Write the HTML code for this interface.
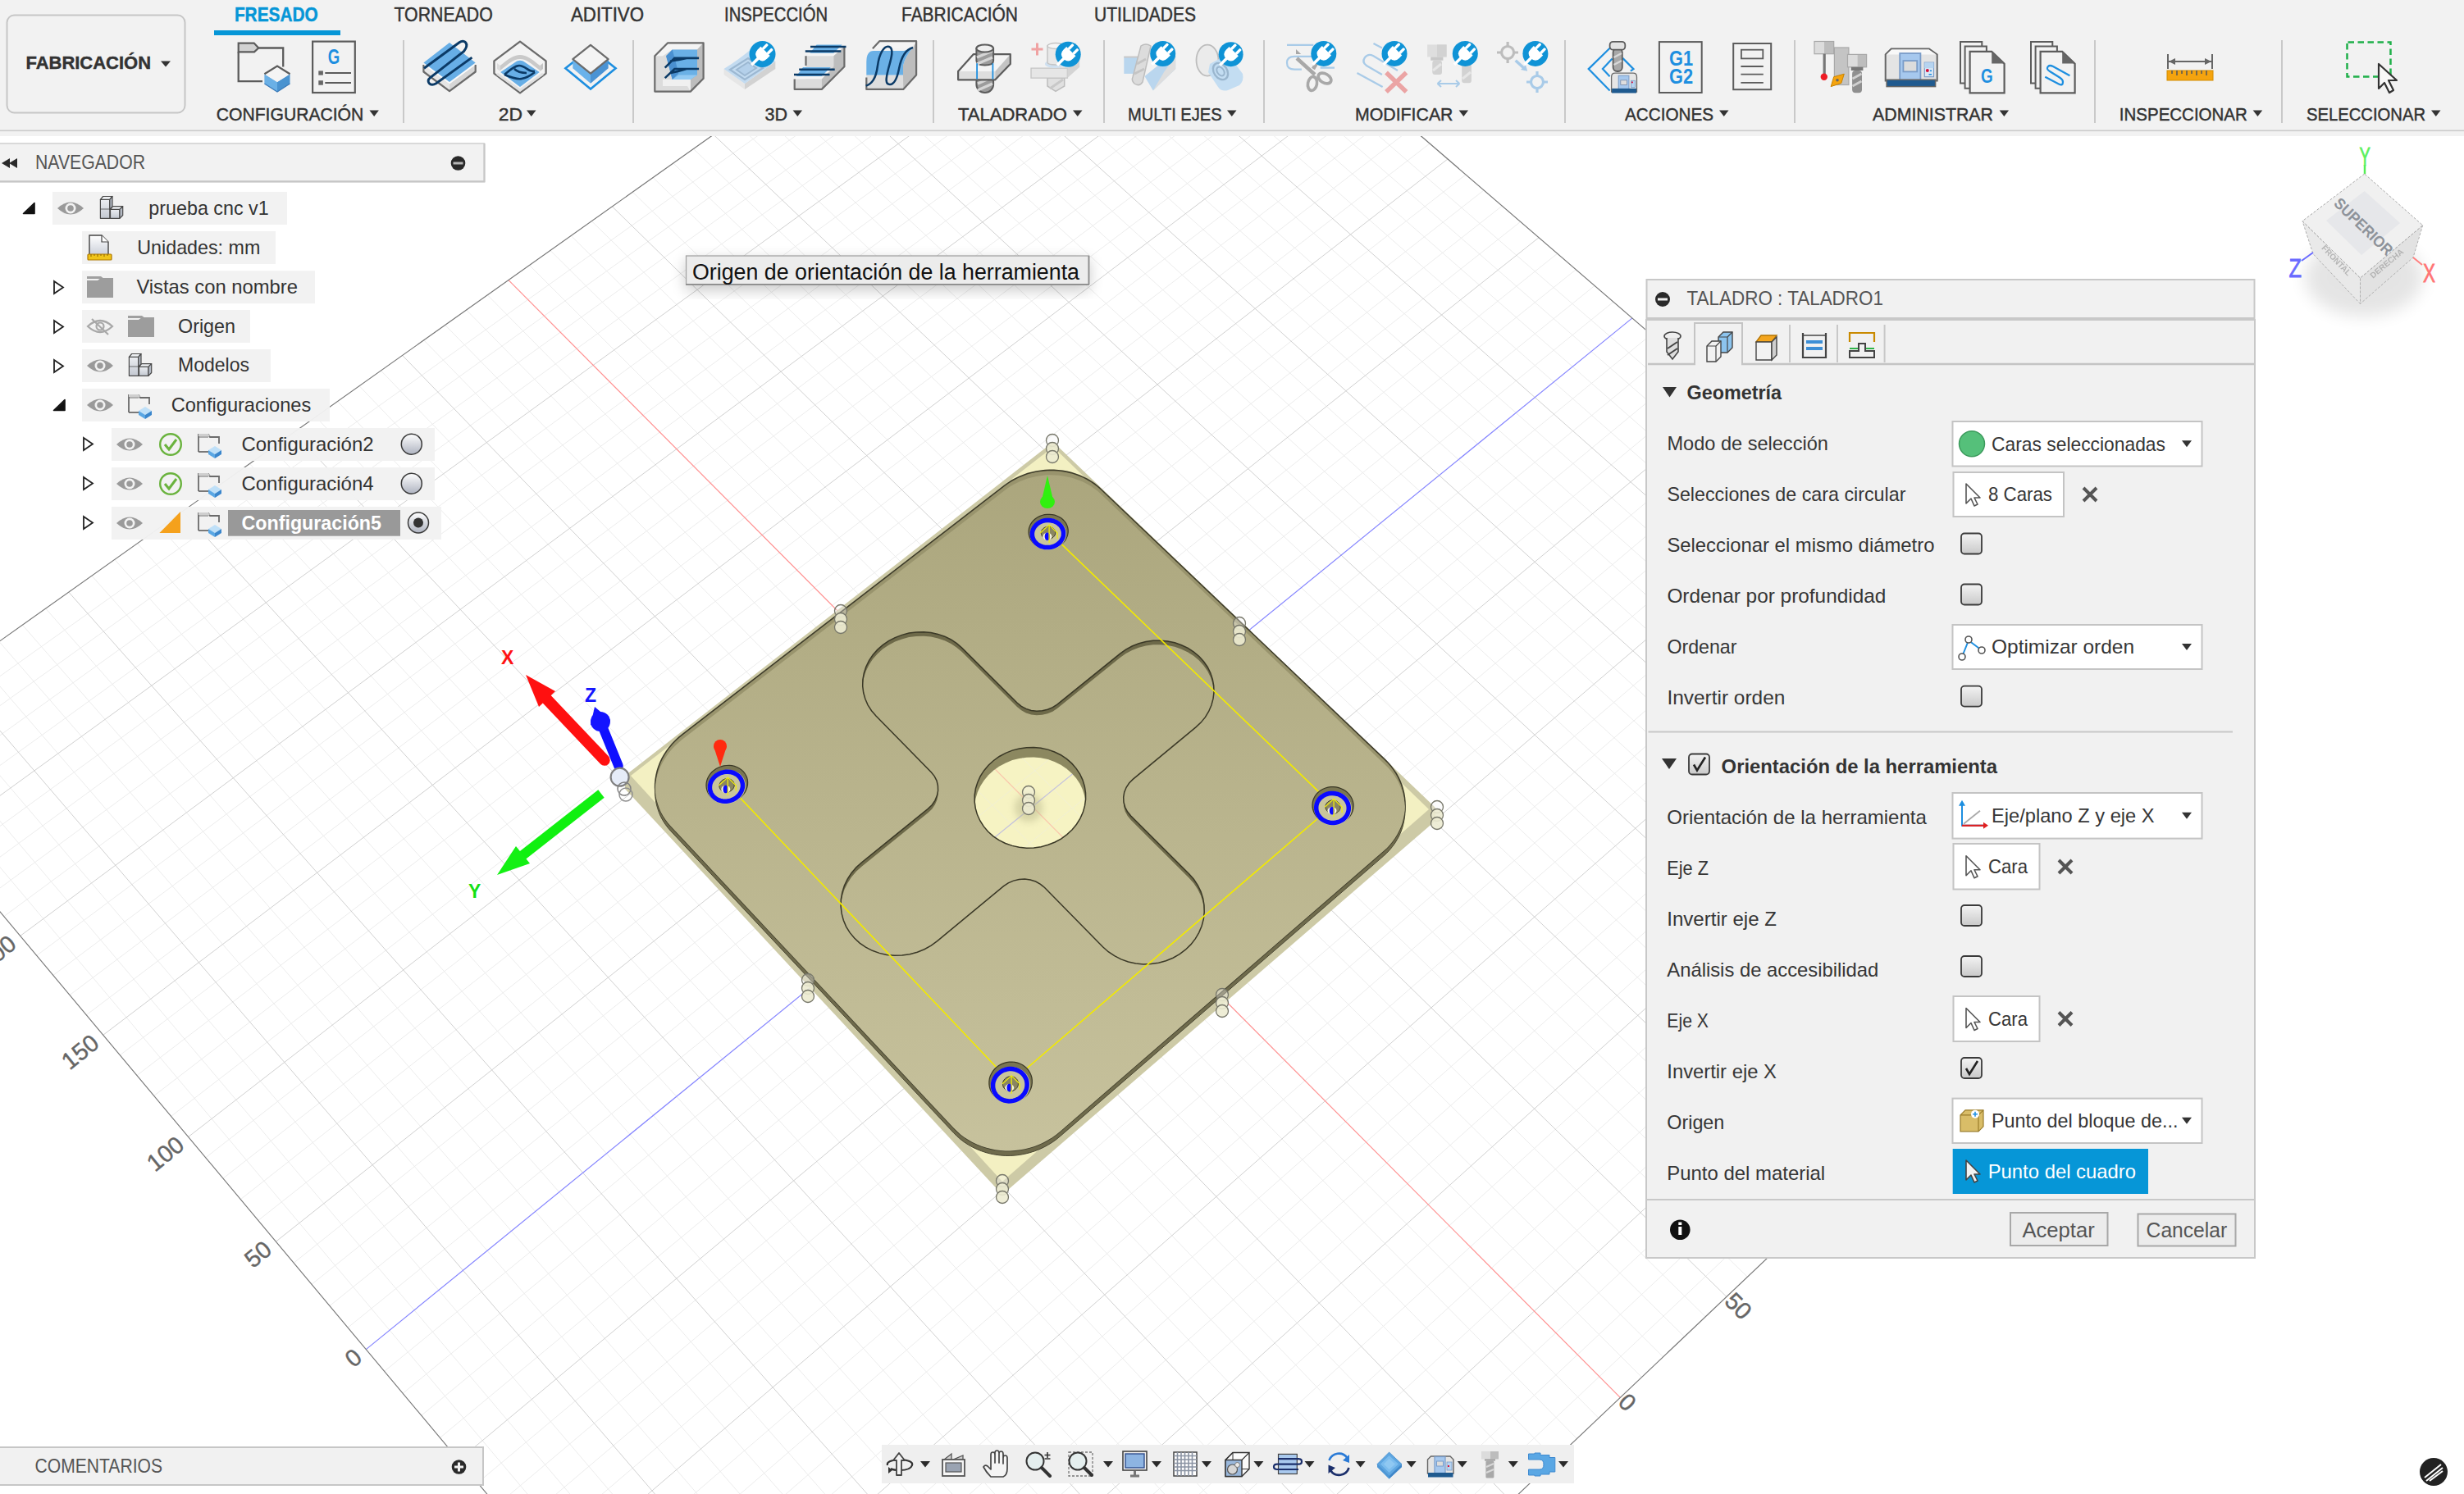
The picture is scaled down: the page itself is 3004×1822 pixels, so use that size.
<!DOCTYPE html>
<html><head><meta charset="utf-8"><title>Fusion CAM</title>
<style>
html,body{margin:0;padding:0;width:3004px;height:1822px;overflow:hidden;background:#ffffff;}
svg{display:block;position:absolute;left:0;top:0;font-family:"Liberation Sans", sans-serif;}
</style></head><body>
<svg width="3004" height="1822" viewBox="0 0 3004 1822">
<rect x="0" y="0" width="3004" height="1822" fill="#ffffff"/>
<g id="grid">
<path d="M1124.9 2457.3L2683.7 986.3M1179.4 2459.6L-145.4 884.8M1098.6 2425.9L2657.1 963.4M1210.1 2430.5L-116.3 864.1M1072.5 2394.7L2630.7 940.6M1240.6 2401.6L-87.3 843.5M1020.8 2332.8L2578.3 895.4M1301.0 2344.2L-29.7 802.7M995.1 2302.1L2552.3 873.0M1331.0 2315.8L-1.1 782.4M969.7 2271.7L2526.5 850.7M1360.8 2287.5L27.4 762.2M944.4 2241.4L2500.7 828.5M1390.4 2259.4L55.7 742.1M894.2 2181.4L2449.7 784.4M1449.1 2203.7L111.9 702.2M869.3 2151.6L2424.4 762.6M1478.2 2176.1L139.8 682.4M844.6 2122.1L2399.2 740.9M1507.1 2148.6L167.6 662.7M820.0 2092.7L2374.1 719.3M1535.9 2121.3L195.2 643.1M771.4 2034.5L2324.4 676.4M1593.0 2067.1L250.1 604.1M747.2 2005.6L2299.7 655.1M1621.3 2040.3L277.3 584.8M723.3 1977.0L2275.1 633.9M1649.5 2013.6L304.4 565.5M699.4 1948.4L2250.7 612.8M1677.4 1987.0L331.4 546.4M652.2 1891.9L2202.2 571.0M1732.9 1934.4L385.0 508.4M628.8 1863.9L2178.2 550.2M1760.5 1908.3L411.6 489.5M605.5 1836.1L2154.2 529.6M1787.8 1882.3L438.1 470.7M582.3 1808.4L2130.4 509.1M1815.1 1856.5L464.4 452.0M536.4 1753.5L2083.1 468.3M1869.1 1805.2L516.7 414.8M513.7 1726.3L2059.7 448.0M1895.8 1779.8L542.7 396.4M491.1 1699.3L2036.3 427.9M1922.5 1754.5L568.6 378.0M468.6 1672.4L2013.1 407.9M1949.0 1729.4L594.3 359.8M424.0 1619.1L1967.0 368.1M2001.5 1679.5L645.5 323.5M401.9 1592.6L1944.1 348.4M2027.6 1654.8L670.9 305.4M380.0 1566.3L1921.3 328.7M2053.5 1630.2L696.2 287.5M358.1 1540.2L1898.7 309.2M2079.3 1605.8L721.3 269.6M314.8 1488.4L1853.7 270.4M2130.4 1557.2L771.3 234.2M293.3 1462.7L1831.3 251.1M2155.8 1533.1L796.1 216.5M271.9 1437.2L1809.1 231.9M2181.0 1509.2L820.8 199.0M250.7 1411.8L1787.0 212.9M2206.2 1485.4L845.4 181.5M208.6 1361.4L1743.1 175.0M2256.0 1438.1L894.3 146.9M187.7 1336.4L1721.3 156.2M2280.7 1414.6L918.5 129.6M166.9 1311.5L1699.6 137.5M2305.3 1391.3L942.7 112.5M146.3 1286.8L1678.0 118.9M2329.7 1368.1L966.7 95.4M105.3 1237.8L1635.2 81.9M2378.3 1322.1L1014.5 61.5M85.0 1213.5L1613.9 63.5M2402.3 1299.2L1038.2 44.7M64.8 1189.4L1592.7 45.3M2426.3 1276.5L1061.9 27.9M44.7 1165.3L1571.6 27.1M2450.1 1253.9L1085.4 11.2M4.8 1117.6L1529.8 -9.0M2497.4 1209.0L1132.1 -21.9M-15.0 1094.0L1509.0 -26.9M2520.9 1186.7L1155.3 -38.4M-34.6 1070.5L1488.3 -44.8M2544.2 1164.6L1178.4 -54.8M-54.2 1047.1L1467.7 -62.5M2567.5 1142.5L1201.4 -71.2M-93.0 1000.7L1426.8 -97.8M2613.6 1098.8L1247.1 -103.6M-112.3 977.6L1406.5 -115.3M2636.5 1077.1L1269.9 -119.7M-131.4 954.7L1386.3 -132.7M2659.2 1055.5L1292.5 -135.8M-150.5 932.0L1366.2 -150.1M2681.9 1034.0L1315.0 -151.7" stroke="#ebebeb" stroke-width="0.95" fill="none"/>
<path d="M1046.6 2363.6L2604.4 917.9M1270.9 2372.8L-58.4 823.1M919.2 2211.3L2475.1 806.4M1419.8 2231.5L83.8 722.1M795.6 2063.5L2349.2 697.7M1564.6 2094.2L222.7 623.6M675.7 1920.1L2226.4 591.9M1705.3 1960.6L358.2 527.3M559.3 1780.9L2106.7 488.6M1842.1 1830.8L490.6 433.4M336.4 1514.2L1876.1 289.7M2104.9 1581.4L746.4 251.9M229.6 1386.5L1765.0 193.9M2231.1 1461.7L869.9 164.2M125.7 1262.3L1656.5 100.3M2354.1 1345.0L990.7 78.4M24.7 1141.4L1550.6 9.0M2473.8 1231.4L1108.8 -5.4M-73.7 1023.8L1447.2 -80.2M2590.6 1120.6L1224.3 -87.4" stroke="#d0d0d0" stroke-width="1.0" fill="none"/>
<path d="M446.3 1645.6L1990.0 387.9" stroke="#8484ff" stroke-width="1.2"/>
<path d="M1975.3 1704.4L620.0 341.6" stroke="#ff9090" stroke-width="1.2"/>
<path d="M-173.3 904.6L1342.0 -170.9L2709.1 1008.2L1150.1 2487.4Z" stroke="#787878" stroke-width="1.15" fill="none"/>
<text x="0" y="0" font-size="29" fill="#666666" stroke="#666" stroke-width="0.4" text-anchor="end" transform="translate(443.3 1658.6) rotate(-39)">0</text>
<text x="0" y="0" font-size="29" fill="#666666" stroke="#666" stroke-width="0.4" text-anchor="end" transform="translate(333.4 1527.2) rotate(-39)">50</text>
<text x="0" y="0" font-size="29" fill="#666666" stroke="#666" stroke-width="0.4" text-anchor="end" transform="translate(226.6 1399.5) rotate(-39)">100</text>
<text x="0" y="0" font-size="29" fill="#666666" stroke="#666" stroke-width="0.4" text-anchor="end" transform="translate(122.7 1275.3) rotate(-39)">150</text>
<text x="0" y="0" font-size="29" fill="#666666" stroke="#666" stroke-width="0.4" text-anchor="end" transform="translate(21.7 1154.4) rotate(-39)">200</text>
<text x="0" y="0" font-size="29" fill="#666666" stroke="#666" stroke-width="0.4" transform="translate(1971.3 1711.4) rotate(45)">0</text>
<text x="0" y="0" font-size="29" fill="#666666" stroke="#666" stroke-width="0.4" transform="translate(2100.9 1588.4) rotate(45)">50</text>
</g>
<defs>
<linearGradient id="topg" x1="0" y1="540" x2="0" y2="1440" gradientUnits="userSpaceOnUse"><stop offset="0" stop-color="#aaa57c"/><stop offset="1" stop-color="#c8c39e"/></linearGradient>
<clipPath id="cpPlate"><path d="M1688.5 926.4L1692.3 930.2L1695.8 934.3L1699.0 938.6L1702.0 943.0L1704.6 947.6L1706.8 952.4L1708.8 957.3L1710.3 962.2L1711.6 967.3L1712.4 972.4L1712.9 977.6L1713.0 982.7L1712.8 987.9L1712.1 993.0L1711.1 998.1L1709.8 1003.1L1708.1 1008.0L1706.0 1012.8L1703.5 1017.5L1700.8 1022.0L1697.7 1026.3L1694.3 1030.5L1690.6 1034.4L1686.6 1038.1L1292.3 1379.9L1287.7 1383.7L1282.8 1387.2L1277.7 1390.3L1272.4 1393.2L1266.9 1395.7L1261.3 1397.9L1255.5 1399.7L1249.6 1401.2L1243.7 1402.3L1237.7 1403.1L1231.6 1403.4L1225.6 1403.4L1219.6 1403.0L1213.7 1402.2L1207.8 1401.1L1202.0 1399.6L1196.4 1397.7L1190.9 1395.5L1185.6 1393.0L1180.5 1390.1L1175.6 1386.9L1171.0 1383.4L1166.7 1379.6L1162.6 1375.5L817.7 1007.4L814.2 1003.4L811.1 999.3L808.3 994.9L805.8 990.4L803.7 985.7L802.0 980.8L800.6 975.9L799.5 970.9L798.9 965.8L798.6 960.6L798.7 955.5L799.2 950.3L800.1 945.1L801.3 940.0L802.9 935.0L804.8 930.0L807.1 925.2L809.8 920.4L812.7 915.9L816.0 911.4L819.5 907.2L823.4 903.2L827.5 899.4L831.8 895.8L1224.7 592.2L1228.9 589.1L1233.3 586.3L1238.0 583.7L1242.8 581.4L1247.7 579.4L1252.8 577.6L1258.0 576.2L1263.3 575.0L1268.6 574.2L1274.1 573.6L1279.5 573.3L1284.9 573.4L1290.3 573.7L1295.7 574.4L1301.0 575.4L1306.2 576.6L1311.3 578.2L1316.2 580.0L1321.0 582.1L1325.7 584.5L1330.1 587.1L1334.3 590.0L1338.3 593.1L1342.1 596.5Z"/></clipPath>
<clipPath id="cpCross"><path d="M1449.6 1065.7L1455.4 1072.3L1460.2 1079.5L1464.0 1087.3L1466.6 1095.4L1468.0 1103.9L1468.2 1112.4L1467.3 1120.9L1465.1 1129.3L1461.7 1137.3L1457.3 1144.9L1451.8 1151.9L1445.3 1158.2L1438.1 1163.7L1430.1 1168.2L1421.5 1171.8L1412.5 1174.3L1403.3 1175.6L1393.9 1175.9L1384.6 1175.0L1375.5 1173.0L1366.8 1169.9L1358.7 1165.7L1351.2 1160.7L1344.5 1154.7L1273.6 1082.5L1268.5 1078.3L1262.6 1075.0L1256.1 1073.0L1249.3 1072.1L1242.3 1072.5L1235.6 1074.1L1229.2 1076.9L1223.6 1080.7L1142.7 1147.7L1135.2 1153.1L1127.0 1157.7L1118.3 1161.2L1109.1 1163.7L1099.8 1165.1L1090.4 1165.3L1081.1 1164.4L1072.1 1162.4L1063.5 1159.3L1055.4 1155.2L1048.1 1150.1L1041.6 1144.1L1036.1 1137.4L1031.6 1130.1L1028.3 1122.2L1026.1 1113.9L1025.1 1105.5L1025.3 1096.9L1026.8 1088.4L1029.4 1080.1L1033.2 1072.2L1038.0 1064.7L1043.9 1057.8L1050.6 1051.7L1131.4 986.3L1136.2 981.7L1139.9 976.3L1142.4 970.4L1143.6 964.3L1143.4 958.1L1142.0 952.1L1139.2 946.6L1135.3 941.7L1067.9 873.0L1062.5 866.7L1058.1 859.8L1054.9 852.5L1052.7 844.8L1051.7 836.8L1051.9 828.8L1053.3 820.9L1055.8 813.2L1059.5 805.7L1064.1 798.8L1069.7 792.4L1076.2 786.6L1083.4 781.7L1091.2 777.6L1099.6 774.4L1108.2 772.1L1117.1 770.9L1126.1 770.7L1134.9 771.6L1143.5 773.4L1151.7 776.2L1159.4 780.0L1166.4 784.7L1172.7 790.1L1240.2 857.3L1245.2 861.3L1250.9 864.4L1257.2 866.4L1263.9 867.2L1270.7 866.8L1277.2 865.3L1283.4 862.7L1288.9 859.1L1365.6 797.1L1372.6 792.1L1380.2 788.0L1388.4 784.8L1397.0 782.6L1405.8 781.3L1414.7 781.2L1423.5 782.0L1432.2 783.8L1440.4 786.7L1448.3 790.4L1455.4 795.1L1461.9 800.5L1467.5 806.7L1472.2 813.5L1475.8 820.7L1478.3 828.4L1479.7 836.2L1480.0 844.2L1479.0 852.2L1476.9 860.0L1473.7 867.5L1469.4 874.6L1464.1 881.1L1457.9 886.9L1381.2 950.4L1376.6 955.0L1373.1 960.3L1370.7 966.2L1369.7 972.3L1370.0 978.5L1371.7 984.5L1374.6 990.1L1378.7 995.1Z"/></clipPath>
<clipPath id="cpHole"><path d="M1300.9 1017.6L1293.9 1022.8L1286.2 1027.0L1277.9 1030.3L1269.3 1032.7L1260.4 1033.9L1251.5 1034.2L1242.6 1033.3L1234.0 1031.4L1225.7 1028.5L1218.0 1024.6L1210.9 1019.8L1204.7 1014.2L1199.3 1007.9L1194.9 1001.0L1191.5 993.6L1189.3 985.9L1188.2 978.0L1188.2 969.9L1189.4 961.9L1191.8 954.2L1195.2 946.7L1199.7 939.7L1205.1 933.2L1211.4 927.5L1218.4 922.5L1226.1 918.4L1234.2 915.1L1242.7 912.9L1251.5 911.7L1260.3 911.4L1269.0 912.3L1277.5 914.1L1285.6 917.0L1293.3 920.7L1300.3 925.4L1306.6 930.9L1312.0 937.1L1316.5 943.8L1319.9 951.1L1322.3 958.8L1323.5 966.7L1323.6 974.7L1322.5 982.7L1320.3 990.6L1316.9 998.1L1312.5 1005.2L1307.2 1011.8L1300.9 1017.6Z"/></clipPath>
<clipPath id="cpHoleF"><path d="M1300.9 1029.6L1293.9 1034.8L1286.2 1039.0L1277.9 1042.3L1269.3 1044.7L1260.4 1045.9L1251.5 1046.2L1242.6 1045.3L1234.0 1043.4L1225.7 1040.5L1218.0 1036.6L1210.9 1031.8L1204.7 1026.2L1199.3 1019.9L1194.9 1013.0L1191.5 1005.6L1189.3 997.9L1188.2 990.0L1188.2 981.9L1189.4 973.9L1191.8 966.2L1195.2 958.7L1199.7 951.7L1205.1 945.2L1211.4 939.5L1218.4 934.5L1226.1 930.4L1234.2 927.1L1242.7 924.9L1251.5 923.7L1260.3 923.4L1269.0 924.3L1277.5 926.1L1285.6 929.0L1293.3 932.7L1300.3 937.4L1306.6 942.9L1312.0 949.1L1316.5 955.8L1319.9 963.1L1322.3 970.8L1323.5 978.7L1323.6 986.7L1322.5 994.7L1320.3 1002.6L1316.9 1010.1L1312.5 1017.2L1307.2 1023.8L1300.9 1029.6Z"/></clipPath>
<radialGradient id="sph" cx="0.45" cy="0.35" r="0.7"><stop offset="0" stop-color="#ffffff"/><stop offset="1" stop-color="#d8d8c8"/></radialGradient>
<filter id="blur4" x="-50%" y="-50%" width="200%" height="200%"><feGaussianBlur stdDeviation="4"/></filter>
</defs>
<g id="model">
<path d="M1284.0 539.0L1750.0 985.0L1750.0 1001.0L1222.0 1457.0L762.0 962.0L762.0 946.0Z" fill="#cdcaa6"/>
<path d="M1284.0 545.0L1742.0 987.0L1222.0 1441.0L769.0 946.0Z" fill="#f3f0c2"/>
<path d="M1688.5 932.4L1692.3 936.2L1695.8 940.3L1699.0 944.6L1702.0 949.0L1704.6 953.6L1706.8 958.4L1708.8 963.3L1710.3 968.2L1711.6 973.3L1712.4 978.4L1712.9 983.6L1713.0 988.7L1712.8 993.9L1712.1 999.0L1711.1 1004.1L1709.8 1009.1L1708.1 1014.0L1706.0 1018.8L1703.5 1023.5L1700.8 1028.0L1697.7 1032.3L1694.3 1036.5L1690.6 1040.4L1686.6 1044.1L1292.3 1385.9L1287.7 1389.7L1282.8 1393.2L1277.7 1396.3L1272.4 1399.2L1266.9 1401.7L1261.3 1403.9L1255.5 1405.7L1249.6 1407.2L1243.7 1408.3L1237.7 1409.1L1231.6 1409.4L1225.6 1409.4L1219.6 1409.0L1213.7 1408.2L1207.8 1407.1L1202.0 1405.6L1196.4 1403.7L1190.9 1401.5L1185.6 1399.0L1180.5 1396.1L1175.6 1392.9L1171.0 1389.4L1166.7 1385.6L1162.6 1381.5L817.7 1013.4L814.2 1009.4L811.1 1005.3L808.3 1000.9L805.8 996.4L803.7 991.7L802.0 986.8L800.6 981.9L799.5 976.9L798.9 971.8L798.6 966.6L798.7 961.5L799.2 956.3L800.1 951.1L801.3 946.0L802.9 941.0L804.8 936.0L807.1 931.2L809.8 926.4L812.7 921.9L816.0 917.4L819.5 913.2L823.4 909.2L827.5 905.4L831.8 901.8L1224.7 598.2L1228.9 595.1L1233.3 592.3L1238.0 589.7L1242.8 587.4L1247.7 585.4L1252.8 583.6L1258.0 582.2L1263.3 581.0L1268.6 580.2L1274.1 579.6L1279.5 579.3L1284.9 579.4L1290.3 579.7L1295.7 580.4L1301.0 581.4L1306.2 582.6L1311.3 584.2L1316.2 586.0L1321.0 588.1L1325.7 590.5L1330.1 593.1L1334.3 596.0L1338.3 599.1L1342.1 602.5Z" fill="#6f6b4c" stroke="#4a4733" stroke-width="1"/>
<path d="M1688.5 926.4L1692.3 930.2L1695.8 934.3L1699.0 938.6L1702.0 943.0L1704.6 947.6L1706.8 952.4L1708.8 957.3L1710.3 962.2L1711.6 967.3L1712.4 972.4L1712.9 977.6L1713.0 982.7L1712.8 987.9L1712.1 993.0L1711.1 998.1L1709.8 1003.1L1708.1 1008.0L1706.0 1012.8L1703.5 1017.5L1700.8 1022.0L1697.7 1026.3L1694.3 1030.5L1690.6 1034.4L1686.6 1038.1L1292.3 1379.9L1287.7 1383.7L1282.8 1387.2L1277.7 1390.3L1272.4 1393.2L1266.9 1395.7L1261.3 1397.9L1255.5 1399.7L1249.6 1401.2L1243.7 1402.3L1237.7 1403.1L1231.6 1403.4L1225.6 1403.4L1219.6 1403.0L1213.7 1402.2L1207.8 1401.1L1202.0 1399.6L1196.4 1397.7L1190.9 1395.5L1185.6 1393.0L1180.5 1390.1L1175.6 1386.9L1171.0 1383.4L1166.7 1379.6L1162.6 1375.5L817.7 1007.4L814.2 1003.4L811.1 999.3L808.3 994.9L805.8 990.4L803.7 985.7L802.0 980.8L800.6 975.9L799.5 970.9L798.9 965.8L798.6 960.6L798.7 955.5L799.2 950.3L800.1 945.1L801.3 940.0L802.9 935.0L804.8 930.0L807.1 925.2L809.8 920.4L812.7 915.9L816.0 911.4L819.5 907.2L823.4 903.2L827.5 899.4L831.8 895.8L1224.7 592.2L1228.9 589.1L1233.3 586.3L1238.0 583.7L1242.8 581.4L1247.7 579.4L1252.8 577.6L1258.0 576.2L1263.3 575.0L1268.6 574.2L1274.1 573.6L1279.5 573.3L1284.9 573.4L1290.3 573.7L1295.7 574.4L1301.0 575.4L1306.2 576.6L1311.3 578.2L1316.2 580.0L1321.0 582.1L1325.7 584.5L1330.1 587.1L1334.3 590.0L1338.3 593.1L1342.1 596.5Z" fill="#99946d" stroke="#3e3c2a" stroke-width="1.6"/>
<g clip-path="url(#cpPlate)"><path d="M1688.5 932.4L1692.3 936.2L1695.8 940.3L1699.0 944.6L1702.0 949.0L1704.6 953.6L1706.8 958.4L1708.8 963.3L1710.3 968.2L1711.6 973.3L1712.4 978.4L1712.9 983.6L1713.0 988.7L1712.8 993.9L1712.1 999.0L1711.1 1004.1L1709.8 1009.1L1708.1 1014.0L1706.0 1018.8L1703.5 1023.5L1700.8 1028.0L1697.7 1032.3L1694.3 1036.5L1690.6 1040.4L1686.6 1044.1L1292.3 1385.9L1287.7 1389.7L1282.8 1393.2L1277.7 1396.3L1272.4 1399.2L1266.9 1401.7L1261.3 1403.9L1255.5 1405.7L1249.6 1407.2L1243.7 1408.3L1237.7 1409.1L1231.6 1409.4L1225.6 1409.4L1219.6 1409.0L1213.7 1408.2L1207.8 1407.1L1202.0 1405.6L1196.4 1403.7L1190.9 1401.5L1185.6 1399.0L1180.5 1396.1L1175.6 1392.9L1171.0 1389.4L1166.7 1385.6L1162.6 1381.5L817.7 1013.4L814.2 1009.4L811.1 1005.3L808.3 1000.9L805.8 996.4L803.7 991.7L802.0 986.8L800.6 981.9L799.5 976.9L798.9 971.8L798.6 966.6L798.7 961.5L799.2 956.3L800.1 951.1L801.3 946.0L802.9 941.0L804.8 936.0L807.1 931.2L809.8 926.4L812.7 921.9L816.0 917.4L819.5 913.2L823.4 909.2L827.5 905.4L831.8 901.8L1224.7 598.2L1228.9 595.1L1233.3 592.3L1238.0 589.7L1242.8 587.4L1247.7 585.4L1252.8 583.6L1258.0 582.2L1263.3 581.0L1268.6 580.2L1274.1 579.6L1279.5 579.3L1284.9 579.4L1290.3 579.7L1295.7 580.4L1301.0 581.4L1306.2 582.6L1311.3 584.2L1316.2 586.0L1321.0 588.1L1325.7 590.5L1330.1 593.1L1334.3 596.0L1338.3 599.1L1342.1 602.5Z" fill="url(#topg)"/></g>
<path d="M1449.6 1065.7L1455.4 1072.3L1460.2 1079.5L1464.0 1087.3L1466.6 1095.4L1468.0 1103.9L1468.2 1112.4L1467.3 1120.9L1465.1 1129.3L1461.7 1137.3L1457.3 1144.9L1451.8 1151.9L1445.3 1158.2L1438.1 1163.7L1430.1 1168.2L1421.5 1171.8L1412.5 1174.3L1403.3 1175.6L1393.9 1175.9L1384.6 1175.0L1375.5 1173.0L1366.8 1169.9L1358.7 1165.7L1351.2 1160.7L1344.5 1154.7L1273.6 1082.5L1268.5 1078.3L1262.6 1075.0L1256.1 1073.0L1249.3 1072.1L1242.3 1072.5L1235.6 1074.1L1229.2 1076.9L1223.6 1080.7L1142.7 1147.7L1135.2 1153.1L1127.0 1157.7L1118.3 1161.2L1109.1 1163.7L1099.8 1165.1L1090.4 1165.3L1081.1 1164.4L1072.1 1162.4L1063.5 1159.3L1055.4 1155.2L1048.1 1150.1L1041.6 1144.1L1036.1 1137.4L1031.6 1130.1L1028.3 1122.2L1026.1 1113.9L1025.1 1105.5L1025.3 1096.9L1026.8 1088.4L1029.4 1080.1L1033.2 1072.2L1038.0 1064.7L1043.9 1057.8L1050.6 1051.7L1131.4 986.3L1136.2 981.7L1139.9 976.3L1142.4 970.4L1143.6 964.3L1143.4 958.1L1142.0 952.1L1139.2 946.6L1135.3 941.7L1067.9 873.0L1062.5 866.7L1058.1 859.8L1054.9 852.5L1052.7 844.8L1051.7 836.8L1051.9 828.8L1053.3 820.9L1055.8 813.2L1059.5 805.7L1064.1 798.8L1069.7 792.4L1076.2 786.6L1083.4 781.7L1091.2 777.6L1099.6 774.4L1108.2 772.1L1117.1 770.9L1126.1 770.7L1134.9 771.6L1143.5 773.4L1151.7 776.2L1159.4 780.0L1166.4 784.7L1172.7 790.1L1240.2 857.3L1245.2 861.3L1250.9 864.4L1257.2 866.4L1263.9 867.2L1270.7 866.8L1277.2 865.3L1283.4 862.7L1288.9 859.1L1365.6 797.1L1372.6 792.1L1380.2 788.0L1388.4 784.8L1397.0 782.6L1405.8 781.3L1414.7 781.2L1423.5 782.0L1432.2 783.8L1440.4 786.7L1448.3 790.4L1455.4 795.1L1461.9 800.5L1467.5 806.7L1472.2 813.5L1475.8 820.7L1478.3 828.4L1479.7 836.2L1480.0 844.2L1479.0 852.2L1476.9 860.0L1473.7 867.5L1469.4 874.6L1464.1 881.1L1457.9 886.9L1381.2 950.4L1376.6 955.0L1373.1 960.3L1370.7 966.2L1369.7 972.3L1370.0 978.5L1371.7 984.5L1374.6 990.1L1378.7 995.1Z" fill="#6d6949"/>
<g clip-path="url(#cpCross)"><path d="M1449.6 1070.7L1455.4 1077.3L1460.2 1084.5L1464.0 1092.3L1466.6 1100.4L1468.0 1108.9L1468.2 1117.4L1467.3 1125.9L1465.1 1134.3L1461.7 1142.3L1457.3 1149.9L1451.8 1156.9L1445.3 1163.2L1438.1 1168.7L1430.1 1173.2L1421.5 1176.8L1412.5 1179.3L1403.3 1180.6L1393.9 1180.9L1384.6 1180.0L1375.5 1178.0L1366.8 1174.9L1358.7 1170.7L1351.2 1165.7L1344.5 1159.7L1273.6 1087.5L1268.5 1083.3L1262.6 1080.0L1256.1 1078.0L1249.3 1077.1L1242.3 1077.5L1235.6 1079.1L1229.2 1081.9L1223.6 1085.7L1142.7 1152.7L1135.2 1158.1L1127.0 1162.7L1118.3 1166.2L1109.1 1168.7L1099.8 1170.1L1090.4 1170.3L1081.1 1169.4L1072.1 1167.4L1063.5 1164.3L1055.4 1160.2L1048.1 1155.1L1041.6 1149.1L1036.1 1142.4L1031.6 1135.1L1028.3 1127.2L1026.1 1118.9L1025.1 1110.5L1025.3 1101.9L1026.8 1093.4L1029.4 1085.1L1033.2 1077.2L1038.0 1069.7L1043.9 1062.8L1050.6 1056.7L1131.4 991.3L1136.2 986.7L1139.9 981.3L1142.4 975.4L1143.6 969.3L1143.4 963.1L1142.0 957.1L1139.2 951.6L1135.3 946.7L1067.9 878.0L1062.5 871.7L1058.1 864.8L1054.9 857.5L1052.7 849.8L1051.7 841.8L1051.9 833.8L1053.3 825.9L1055.8 818.2L1059.5 810.7L1064.1 803.8L1069.7 797.4L1076.2 791.6L1083.4 786.7L1091.2 782.6L1099.6 779.4L1108.2 777.1L1117.1 775.9L1126.1 775.7L1134.9 776.6L1143.5 778.4L1151.7 781.2L1159.4 785.0L1166.4 789.7L1172.7 795.1L1240.2 862.3L1245.2 866.3L1250.9 869.4L1257.2 871.4L1263.9 872.2L1270.7 871.8L1277.2 870.3L1283.4 867.7L1288.9 864.1L1365.6 802.1L1372.6 797.1L1380.2 793.0L1388.4 789.8L1397.0 787.6L1405.8 786.3L1414.7 786.2L1423.5 787.0L1432.2 788.8L1440.4 791.7L1448.3 795.4L1455.4 800.1L1461.9 805.5L1467.5 811.7L1472.2 818.5L1475.8 825.7L1478.3 833.4L1479.7 841.2L1480.0 849.2L1479.0 857.2L1476.9 865.0L1473.7 872.5L1469.4 879.6L1464.1 886.1L1457.9 891.9L1381.2 955.4L1376.6 960.0L1373.1 965.3L1370.7 971.2L1369.7 977.3L1370.0 983.5L1371.7 989.5L1374.6 995.1L1378.7 1000.1Z" fill="url(#topg)"/></g>
<path d="M1449.6 1065.7L1455.4 1072.3L1460.2 1079.5L1464.0 1087.3L1466.6 1095.4L1468.0 1103.9L1468.2 1112.4L1467.3 1120.9L1465.1 1129.3L1461.7 1137.3L1457.3 1144.9L1451.8 1151.9L1445.3 1158.2L1438.1 1163.7L1430.1 1168.2L1421.5 1171.8L1412.5 1174.3L1403.3 1175.6L1393.9 1175.9L1384.6 1175.0L1375.5 1173.0L1366.8 1169.9L1358.7 1165.7L1351.2 1160.7L1344.5 1154.7L1273.6 1082.5L1268.5 1078.3L1262.6 1075.0L1256.1 1073.0L1249.3 1072.1L1242.3 1072.5L1235.6 1074.1L1229.2 1076.9L1223.6 1080.7L1142.7 1147.7L1135.2 1153.1L1127.0 1157.7L1118.3 1161.2L1109.1 1163.7L1099.8 1165.1L1090.4 1165.3L1081.1 1164.4L1072.1 1162.4L1063.5 1159.3L1055.4 1155.2L1048.1 1150.1L1041.6 1144.1L1036.1 1137.4L1031.6 1130.1L1028.3 1122.2L1026.1 1113.9L1025.1 1105.5L1025.3 1096.9L1026.8 1088.4L1029.4 1080.1L1033.2 1072.2L1038.0 1064.7L1043.9 1057.8L1050.6 1051.7L1131.4 986.3L1136.2 981.7L1139.9 976.3L1142.4 970.4L1143.6 964.3L1143.4 958.1L1142.0 952.1L1139.2 946.6L1135.3 941.7L1067.9 873.0L1062.5 866.7L1058.1 859.8L1054.9 852.5L1052.7 844.8L1051.7 836.8L1051.9 828.8L1053.3 820.9L1055.8 813.2L1059.5 805.7L1064.1 798.8L1069.7 792.4L1076.2 786.6L1083.4 781.7L1091.2 777.6L1099.6 774.4L1108.2 772.1L1117.1 770.9L1126.1 770.7L1134.9 771.6L1143.5 773.4L1151.7 776.2L1159.4 780.0L1166.4 784.7L1172.7 790.1L1240.2 857.3L1245.2 861.3L1250.9 864.4L1257.2 866.4L1263.9 867.2L1270.7 866.8L1277.2 865.3L1283.4 862.7L1288.9 859.1L1365.6 797.1L1372.6 792.1L1380.2 788.0L1388.4 784.8L1397.0 782.6L1405.8 781.3L1414.7 781.2L1423.5 782.0L1432.2 783.8L1440.4 786.7L1448.3 790.4L1455.4 795.1L1461.9 800.5L1467.5 806.7L1472.2 813.5L1475.8 820.7L1478.3 828.4L1479.7 836.2L1480.0 844.2L1479.0 852.2L1476.9 860.0L1473.7 867.5L1469.4 874.6L1464.1 881.1L1457.9 886.9L1381.2 950.4L1376.6 955.0L1373.1 960.3L1370.7 966.2L1369.7 972.3L1370.0 978.5L1371.7 984.5L1374.6 990.1L1378.7 995.1Z" fill="none" stroke="#3a3826" stroke-width="1.5"/>
<path d="M1300.9 1017.6L1293.9 1022.8L1286.2 1027.0L1277.9 1030.3L1269.3 1032.7L1260.4 1033.9L1251.5 1034.2L1242.6 1033.3L1234.0 1031.4L1225.7 1028.5L1218.0 1024.6L1210.9 1019.8L1204.7 1014.2L1199.3 1007.9L1194.9 1001.0L1191.5 993.6L1189.3 985.9L1188.2 978.0L1188.2 969.9L1189.4 961.9L1191.8 954.2L1195.2 946.7L1199.7 939.7L1205.1 933.2L1211.4 927.5L1218.4 922.5L1226.1 918.4L1234.2 915.1L1242.7 912.9L1251.5 911.7L1260.3 911.4L1269.0 912.3L1277.5 914.1L1285.6 917.0L1293.3 920.7L1300.3 925.4L1306.6 930.9L1312.0 937.1L1316.5 943.8L1319.9 951.1L1322.3 958.8L1323.5 966.7L1323.6 974.7L1322.5 982.7L1320.3 990.6L1316.9 998.1L1312.5 1005.2L1307.2 1011.8L1300.9 1017.6Z" fill="#8c8860"/>
<g clip-path="url(#cpHole)"><path d="M1300.9 1029.6L1293.9 1034.8L1286.2 1039.0L1277.9 1042.3L1269.3 1044.7L1260.4 1045.9L1251.5 1046.2L1242.6 1045.3L1234.0 1043.4L1225.7 1040.5L1218.0 1036.6L1210.9 1031.8L1204.7 1026.2L1199.3 1019.9L1194.9 1013.0L1191.5 1005.6L1189.3 997.9L1188.2 990.0L1188.2 981.9L1189.4 973.9L1191.8 966.2L1195.2 958.7L1199.7 951.7L1205.1 945.2L1211.4 939.5L1218.4 934.5L1226.1 930.4L1234.2 927.1L1242.7 924.9L1251.5 923.7L1260.3 923.4L1269.0 924.3L1277.5 926.1L1285.6 929.0L1293.3 932.7L1300.3 937.4L1306.6 942.9L1312.0 949.1L1316.5 955.8L1319.9 963.1L1322.3 970.8L1323.5 978.7L1323.6 986.7L1322.5 994.7L1320.3 1002.6L1316.9 1010.1L1312.5 1017.2L1307.2 1023.8L1300.9 1029.6Z" fill="#f6f3c3"/></g>
<g clip-path="url(#cpHole)"><g clip-path="url(#cpHoleF)"><use href="#grid" opacity="0.45"/></g><circle cx="1254" cy="985" r="17" fill="#b8b68c" opacity="0.5" filter="url(#blur4)"/></g>
<path d="M1300.9 1017.6L1293.9 1022.8L1286.2 1027.0L1277.9 1030.3L1269.3 1032.7L1260.4 1033.9L1251.5 1034.2L1242.6 1033.3L1234.0 1031.4L1225.7 1028.5L1218.0 1024.6L1210.9 1019.8L1204.7 1014.2L1199.3 1007.9L1194.9 1001.0L1191.5 993.6L1189.3 985.9L1188.2 978.0L1188.2 969.9L1189.4 961.9L1191.8 954.2L1195.2 946.7L1199.7 939.7L1205.1 933.2L1211.4 927.5L1218.4 922.5L1226.1 918.4L1234.2 915.1L1242.7 912.9L1251.5 911.7L1260.3 911.4L1269.0 912.3L1277.5 914.1L1285.6 917.0L1293.3 920.7L1300.3 925.4L1306.6 930.9L1312.0 937.1L1316.5 943.8L1319.9 951.1L1322.3 958.8L1323.5 966.7L1323.6 974.7L1322.5 982.7L1320.3 990.6L1316.9 998.1L1312.5 1005.2L1307.2 1011.8L1300.9 1017.6Z" fill="none" stroke="#3a3826" stroke-width="1.5"/>
<path d="M1278.1 648.1L1625.1 982.3L1232.1 1319.8L886.3 956.1" fill="none" stroke="#f2ea00" stroke-width="1.6"/>
<path d="M1294.1 663.6L1291.6 665.3L1288.9 666.7L1286.0 667.9L1282.9 668.6L1279.8 669.1L1276.6 669.1L1273.5 668.8L1270.4 668.2L1267.5 667.2L1264.8 665.9L1262.3 664.2L1260.0 662.3L1258.1 660.2L1256.5 657.9L1255.3 655.3L1254.5 652.7L1254.1 650.0L1254.1 647.3L1254.5 644.5L1255.3 641.9L1256.5 639.3L1258.1 636.9L1260.0 634.7L1262.2 632.7L1264.7 631.0L1267.4 629.6L1270.3 628.5L1273.4 627.7L1276.5 627.3L1279.6 627.3L1282.8 627.6L1285.8 628.2L1288.7 629.2L1291.4 630.5L1294.0 632.1L1296.2 634.0L1298.1 636.1L1299.7 638.4L1300.9 640.9L1301.8 643.6L1302.2 646.3L1302.2 649.0L1301.8 651.7L1301.0 654.4L1299.8 657.0L1298.3 659.4L1296.4 661.6L1294.1 663.6Z" fill="#7a7652" stroke="#3a3826" stroke-width="1.2"/>
<g clip-path="url(#cpPlate)"><path d="M1292.6 665.6L1290.3 667.2L1287.8 668.5L1285.1 669.5L1282.3 670.2L1279.4 670.6L1276.5 670.7L1273.6 670.4L1270.8 669.8L1268.2 668.9L1265.6 667.7L1263.3 666.2L1261.3 664.5L1259.5 662.5L1258.1 660.3L1257.0 658.0L1256.2 655.6L1255.8 653.1L1255.8 650.6L1256.2 648.1L1256.9 645.7L1258.0 643.3L1259.5 641.1L1261.2 639.1L1263.3 637.3L1265.6 635.7L1268.1 634.4L1270.7 633.4L1273.5 632.7L1276.4 632.3L1279.3 632.3L1282.1 632.5L1284.9 633.1L1287.6 634.0L1290.1 635.2L1292.4 636.7L1294.5 638.4L1296.2 640.4L1297.7 642.5L1298.8 644.8L1299.6 647.2L1300.0 649.7L1300.0 652.2L1299.6 654.7L1298.9 657.2L1297.8 659.5L1296.4 661.7L1294.6 663.8L1292.6 665.6Z" fill="#c9c59c"/></g>
<path d="M1290.1 663.2L1288.1 664.6L1286.0 665.7L1283.7 666.6L1281.3 667.2L1278.8 667.6L1276.3 667.6L1273.8 667.4L1271.4 666.9L1269.0 666.1L1266.9 665.0L1264.9 663.8L1263.1 662.2L1261.6 660.6L1260.3 658.7L1259.4 656.7L1258.7 654.6L1258.4 652.5L1258.4 650.3L1258.7 648.1L1259.4 646.0L1260.3 644.0L1261.6 642.1L1263.1 640.4L1264.8 638.8L1266.8 637.4L1269.0 636.3L1271.3 635.4L1273.7 634.8L1276.2 634.5L1278.6 634.5L1281.1 634.7L1283.5 635.2L1285.8 636.0L1288.0 637.0L1290.0 638.3L1291.8 639.8L1293.3 641.5L1294.6 643.3L1295.5 645.3L1296.2 647.4L1296.5 649.5L1296.5 651.7L1296.2 653.9L1295.6 656.0L1294.6 658.0L1293.4 659.9L1291.9 661.7L1290.1 663.2Z" fill="none" stroke="#0a0aff" stroke-width="5.5"/>
<path d="M1283.8 655.4L1282.9 656.0L1281.9 656.5L1280.9 656.9L1279.8 657.2L1278.6 657.3L1277.5 657.4L1276.3 657.2L1275.2 657.0L1274.2 656.7L1273.2 656.2L1272.3 655.6L1271.5 654.9L1270.8 654.1L1270.2 653.3L1269.8 652.4L1269.5 651.4L1269.3 650.5L1269.3 649.5L1269.5 648.5L1269.8 647.5L1270.2 646.6L1270.8 645.7L1271.5 644.9L1272.3 644.2L1273.2 643.6L1274.1 643.1L1275.2 642.7L1276.3 642.4L1277.4 642.3L1278.6 642.2L1279.7 642.3L1280.8 642.6L1281.8 642.9L1282.8 643.4L1283.7 644.0L1284.5 644.7L1285.2 645.4L1285.8 646.3L1286.3 647.2L1286.6 648.1L1286.7 649.1L1286.7 650.1L1286.6 651.1L1286.3 652.0L1285.9 653.0L1285.3 653.8L1284.6 654.6L1283.8 655.4Z" fill="#8a8660" stroke="#3a3826" stroke-width="1"/>
<ellipse cx="1276.9" cy="654.2" rx="5.5" ry="4.5" fill="#f8f6e0"/><ellipse cx="1276.9" cy="654.2" rx="3.2" ry="4.8" fill="#0a0aff"/>
<path d="M1268.1 650.1L1279.1 640.1L1289.1 650.1V657.1M1279.1 640.1V662.1" fill="none" stroke="#eeea10" stroke-width="1.3"/>
<path d="M1642.4 999.0L1639.9 1000.9L1637.1 1002.5L1634.2 1003.7L1631.0 1004.6L1627.8 1005.0L1624.5 1005.1L1621.2 1004.8L1618.0 1004.1L1614.9 1003.0L1612.0 1001.6L1609.3 999.8L1606.9 997.8L1604.8 995.5L1603.1 992.9L1601.7 990.2L1600.7 987.3L1600.1 984.4L1600.0 981.4L1600.3 978.4L1601.0 975.5L1602.2 972.8L1603.7 970.2L1605.6 967.7L1607.8 965.6L1610.3 963.7L1613.0 962.2L1616.0 961.0L1619.1 960.1L1622.4 959.7L1625.6 959.6L1628.9 959.9L1632.1 960.6L1635.1 961.7L1638.0 963.1L1640.7 964.8L1643.1 966.9L1645.2 969.2L1647.0 971.7L1648.4 974.4L1649.4 977.3L1650.0 980.2L1650.1 983.2L1649.8 986.1L1649.1 989.0L1648.0 991.8L1646.5 994.5L1644.6 996.9L1642.4 999.0Z" fill="#7a7652" stroke="#3a3826" stroke-width="1.2"/>
<g clip-path="url(#cpPlate)"><path d="M1640.9 1001.2L1638.6 1003.0L1636.0 1004.4L1633.3 1005.5L1630.4 1006.3L1627.5 1006.7L1624.5 1006.8L1621.5 1006.5L1618.5 1005.9L1615.7 1004.9L1613.0 1003.6L1610.6 1002.0L1608.3 1000.1L1606.4 997.9L1604.8 995.6L1603.5 993.1L1602.6 990.5L1602.1 987.8L1602.0 985.0L1602.3 982.3L1602.9 979.7L1604.0 977.1L1605.4 974.7L1607.1 972.5L1609.1 970.5L1611.4 968.8L1614.0 967.4L1616.7 966.3L1619.5 965.5L1622.5 965.1L1625.5 965.0L1628.5 965.3L1631.4 966.0L1634.2 966.9L1636.9 968.2L1639.3 969.8L1641.5 971.7L1643.5 973.8L1645.1 976.1L1646.4 978.6L1647.3 981.2L1647.8 983.9L1647.9 986.7L1647.7 989.4L1647.0 992.1L1646.0 994.6L1644.6 997.0L1642.9 999.2L1640.9 1001.2Z" fill="#c9c59c"/></g>
<path d="M1638.2 998.7L1636.2 1000.2L1634.0 1001.4L1631.7 1002.4L1629.2 1003.0L1626.6 1003.4L1624.0 1003.5L1621.5 1003.2L1618.9 1002.7L1616.5 1001.8L1614.2 1000.7L1612.0 999.3L1610.1 997.7L1608.5 995.8L1607.1 993.8L1606.0 991.7L1605.2 989.4L1604.8 987.1L1604.7 984.7L1604.9 982.3L1605.5 980.1L1606.3 977.9L1607.6 975.8L1609.0 973.9L1610.8 972.2L1612.8 970.7L1615.0 969.5L1617.3 968.5L1619.8 967.8L1622.3 967.5L1624.9 967.4L1627.5 967.7L1630.0 968.2L1632.5 969.0L1634.8 970.2L1636.9 971.5L1638.8 973.2L1640.5 975.0L1641.9 977.0L1643.0 979.2L1643.8 981.4L1644.2 983.7L1644.3 986.1L1644.1 988.4L1643.5 990.7L1642.7 993.0L1641.5 995.0L1640.0 996.9L1638.2 998.7Z" fill="none" stroke="#0a0aff" stroke-width="5.5"/>
<path d="M1631.3 990.1L1630.4 990.8L1629.4 991.4L1628.3 991.8L1627.2 992.1L1626.0 992.3L1624.8 992.3L1623.6 992.2L1622.5 991.9L1621.4 991.6L1620.3 991.0L1619.3 990.4L1618.5 989.7L1617.7 988.8L1617.1 987.9L1616.6 986.9L1616.2 985.9L1616.0 984.8L1616.0 983.8L1616.1 982.7L1616.3 981.6L1616.7 980.6L1617.3 979.7L1618.0 978.8L1618.8 978.0L1619.7 977.4L1620.7 976.8L1621.7 976.4L1622.9 976.1L1624.0 975.9L1625.2 975.9L1626.4 976.0L1627.5 976.2L1628.7 976.6L1629.7 977.1L1630.7 977.8L1631.5 978.5L1632.3 979.3L1632.9 980.2L1633.4 981.2L1633.8 982.3L1634.0 983.3L1634.1 984.4L1634.0 985.5L1633.7 986.5L1633.3 987.5L1632.8 988.5L1632.1 989.3L1631.3 990.1Z" fill="#8a8660" stroke="#3a3826" stroke-width="1"/>
<ellipse cx="1624.0" cy="988.7" rx="5.5" ry="4.5" fill="#f8f6e0"/><ellipse cx="1624.0" cy="988.7" rx="3.2" ry="4.8" fill="#0a0aff"/>
<path d="M1615.1 984.3L1626.1 974.3L1636.1 984.3V991.3M1626.1 974.3V996.3" fill="none" stroke="#eeea10" stroke-width="1.3"/>
<path d="M1249.4 1338.0L1246.7 1340.1L1243.7 1341.8L1240.5 1343.1L1237.2 1344.1L1233.8 1344.6L1230.3 1344.7L1226.9 1344.4L1223.6 1343.6L1220.4 1342.4L1217.4 1340.9L1214.7 1339.0L1212.3 1336.7L1210.2 1334.2L1208.5 1331.4L1207.2 1328.5L1206.3 1325.4L1205.9 1322.1L1205.9 1318.9L1206.3 1315.7L1207.2 1312.5L1208.6 1309.5L1210.3 1306.6L1212.4 1304.0L1214.8 1301.6L1217.6 1299.6L1220.6 1297.9L1223.7 1296.6L1227.0 1295.6L1230.4 1295.1L1233.9 1295.0L1237.3 1295.4L1240.6 1296.1L1243.7 1297.3L1246.7 1298.8L1249.4 1300.7L1251.9 1302.9L1253.9 1305.4L1255.7 1308.2L1257.0 1311.1L1257.9 1314.2L1258.3 1317.4L1258.3 1320.7L1257.9 1323.9L1257.0 1327.1L1255.7 1330.1L1254.0 1333.0L1251.9 1335.6L1249.4 1338.0Z" fill="#7a7652" stroke="#3a3826" stroke-width="1.2"/>
<g clip-path="url(#cpPlate)"><path d="M1247.7 1340.4L1245.2 1342.3L1242.5 1343.9L1239.5 1345.1L1236.5 1346.0L1233.4 1346.4L1230.2 1346.5L1227.1 1346.2L1224.0 1345.5L1221.1 1344.5L1218.4 1343.1L1215.9 1341.3L1213.6 1339.2L1211.7 1336.9L1210.1 1334.4L1209.0 1331.7L1208.1 1328.8L1207.8 1325.8L1207.8 1322.9L1208.2 1319.9L1209.0 1317.0L1210.2 1314.2L1211.8 1311.6L1213.8 1309.2L1216.0 1307.0L1218.5 1305.2L1221.2 1303.6L1224.1 1302.4L1227.2 1301.5L1230.3 1301.1L1233.4 1301.0L1236.6 1301.3L1239.6 1302.0L1242.5 1303.0L1245.2 1304.4L1247.7 1306.2L1249.9 1308.2L1251.9 1310.5L1253.4 1313.0L1254.6 1315.7L1255.5 1318.6L1255.9 1321.5L1255.9 1324.5L1255.5 1327.5L1254.7 1330.4L1253.4 1333.2L1251.9 1335.8L1249.9 1338.2L1247.7 1340.4Z" fill="#c9c59c"/></g>
<path d="M1245.1 1337.6L1242.9 1339.3L1240.5 1340.6L1238.0 1341.7L1235.4 1342.4L1232.7 1342.8L1229.9 1342.9L1227.2 1342.6L1224.6 1342.0L1222.1 1341.1L1219.7 1339.9L1217.6 1338.4L1215.6 1336.6L1214.0 1334.6L1212.6 1332.4L1211.6 1330.1L1210.9 1327.6L1210.6 1325.0L1210.6 1322.5L1210.9 1319.9L1211.7 1317.4L1212.7 1315.0L1214.1 1312.7L1215.7 1310.7L1217.7 1308.8L1219.8 1307.2L1222.2 1305.8L1224.7 1304.8L1227.3 1304.0L1230.0 1303.6L1232.7 1303.6L1235.4 1303.8L1238.1 1304.4L1240.6 1305.3L1242.9 1306.5L1245.1 1308.0L1247.0 1309.8L1248.7 1311.8L1250.0 1314.0L1251.1 1316.3L1251.8 1318.8L1252.1 1321.3L1252.1 1323.9L1251.8 1326.5L1251.1 1329.0L1250.0 1331.4L1248.7 1333.7L1247.0 1335.7L1245.1 1337.6Z" fill="none" stroke="#0a0aff" stroke-width="5.5"/>
<path d="M1238.2 1328.3L1237.2 1329.1L1236.2 1329.7L1235.0 1330.2L1233.8 1330.5L1232.6 1330.7L1231.3 1330.7L1230.1 1330.6L1228.9 1330.3L1227.7 1329.9L1226.7 1329.4L1225.7 1328.7L1224.8 1327.9L1224.1 1326.9L1223.4 1325.9L1223.0 1324.9L1222.6 1323.7L1222.5 1322.6L1222.5 1321.4L1222.7 1320.2L1223.0 1319.1L1223.5 1318.0L1224.1 1317.0L1224.8 1316.0L1225.7 1315.2L1226.7 1314.4L1227.8 1313.8L1228.9 1313.3L1230.1 1313.0L1231.4 1312.8L1232.6 1312.8L1233.8 1312.9L1235.0 1313.2L1236.2 1313.6L1237.3 1314.1L1238.2 1314.8L1239.1 1315.6L1239.9 1316.5L1240.5 1317.5L1241.0 1318.6L1241.3 1319.7L1241.4 1320.9L1241.4 1322.1L1241.3 1323.2L1241.0 1324.4L1240.5 1325.5L1239.9 1326.5L1239.1 1327.5L1238.2 1328.3Z" fill="#8a8660" stroke="#3a3826" stroke-width="1"/>
<ellipse cx="1230.7" cy="1326.6" rx="5.5" ry="4.5" fill="#f8f6e0"/><ellipse cx="1230.7" cy="1326.6" rx="3.2" ry="4.8" fill="#0a0aff"/>
<path d="M1222.1 1321.8L1233.1 1311.8L1243.1 1321.8V1328.8M1233.1 1311.8V1333.8" fill="none" stroke="#eeea10" stroke-width="1.3"/>
<path d="M902.2 972.8L899.5 974.7L896.6 976.3L893.4 977.5L890.2 978.3L886.9 978.8L883.6 978.9L880.3 978.6L877.1 977.9L874.1 976.8L871.3 975.4L868.8 973.6L866.5 971.5L864.6 969.2L863.1 966.7L862.0 964.0L861.3 961.1L861.0 958.2L861.1 955.2L861.7 952.2L862.7 949.3L864.1 946.5L865.9 943.9L868.0 941.5L870.4 939.4L873.1 937.5L876.1 936.0L879.2 934.8L882.4 933.9L885.7 933.5L889.0 933.4L892.2 933.7L895.4 934.4L898.4 935.5L901.2 936.9L903.7 938.6L906.0 940.7L907.9 943.0L909.4 945.5L910.6 948.2L911.3 951.0L911.6 954.0L911.5 957.0L910.9 959.9L909.9 962.8L908.5 965.6L906.8 968.2L904.6 970.6L902.2 972.8Z" fill="#7a7652" stroke="#3a3826" stroke-width="1.2"/>
<g clip-path="url(#cpPlate)"><path d="M900.5 975.0L898.0 976.7L895.3 978.2L892.4 979.3L889.5 980.1L886.4 980.5L883.4 980.6L880.4 980.3L877.5 979.6L874.7 978.7L872.1 977.3L869.8 975.7L867.8 973.8L866.0 971.7L864.6 969.4L863.6 966.9L862.9 964.3L862.6 961.6L862.8 958.8L863.3 956.1L864.2 953.5L865.5 950.9L867.1 948.5L869.1 946.3L871.3 944.3L873.8 942.6L876.5 941.2L879.3 940.1L882.3 939.3L885.3 938.9L888.3 938.8L891.3 939.1L894.2 939.8L897.0 940.7L899.5 942.0L901.9 943.6L903.9 945.5L905.7 947.6L907.1 949.9L908.1 952.4L908.8 955.0L909.1 957.7L908.9 960.5L908.4 963.2L907.5 965.8L906.3 968.4L904.6 970.8L902.7 973.0L900.5 975.0Z" fill="#c9c59c"/></g>
<path d="M898.0 972.4L895.9 973.9L893.6 975.2L891.1 976.1L888.5 976.8L885.9 977.2L883.3 977.2L880.7 977.0L878.2 976.4L875.8 975.6L873.6 974.5L871.6 973.1L869.8 971.4L868.3 969.6L867.1 967.6L866.2 965.4L865.6 963.2L865.4 960.8L865.5 958.5L865.9 956.1L866.7 953.8L867.8 951.6L869.2 949.6L870.9 947.7L872.9 946.0L875.0 944.5L877.3 943.3L879.8 942.3L882.3 941.6L884.9 941.3L887.6 941.2L890.1 941.4L892.6 942.0L895.0 942.8L897.2 944.0L899.2 945.3L901.0 947.0L902.5 948.8L903.7 950.8L904.6 952.9L905.2 955.2L905.5 957.5L905.4 959.9L904.9 962.2L904.1 964.5L903.0 966.7L901.6 968.8L900.0 970.7L898.0 972.4Z" fill="none" stroke="#0a0aff" stroke-width="5.5"/>
<path d="M891.8 963.9L890.8 964.6L889.8 965.1L888.7 965.6L887.5 965.9L886.3 966.0L885.1 966.1L883.9 966.0L882.8 965.7L881.7 965.3L880.7 964.8L879.8 964.2L879.0 963.4L878.3 962.6L877.7 961.7L877.3 960.7L877.0 959.7L876.9 958.6L877.0 957.5L877.2 956.5L877.6 955.4L878.1 954.4L878.7 953.5L879.5 952.6L880.3 951.8L881.3 951.1L882.4 950.6L883.5 950.1L884.7 949.8L885.9 949.7L887.1 949.6L888.2 949.8L889.4 950.0L890.5 950.4L891.5 950.9L892.4 951.5L893.2 952.3L893.9 953.1L894.4 954.0L894.8 955.0L895.1 956.0L895.2 957.1L895.2 958.2L895.0 959.2L894.6 960.3L894.1 961.3L893.5 962.2L892.7 963.1L891.8 963.9Z" fill="#8a8660" stroke="#3a3826" stroke-width="1"/>
<ellipse cx="884.8" cy="962.5" rx="5.5" ry="4.5" fill="#f8f6e0"/><ellipse cx="884.8" cy="962.5" rx="3.2" ry="4.8" fill="#0a0aff"/>
<path d="M876.3 958.1L887.3 948.1L897.3 958.1V965.1M887.3 948.1V970.1" fill="none" stroke="#eeea10" stroke-width="1.3"/>
<circle cx="1283.0" cy="537.0" r="7.5" fill="#f4f4f4" stroke="#77776a" stroke-width="1.3" fill-opacity="0.35"/>
<circle cx="1283.0" cy="547.0" r="7.5" fill="#ecebd2" stroke="#77776a" stroke-width="1.3" fill-opacity="0.9"/>
<circle cx="1283.0" cy="557.0" r="7.5" fill="#ecebd2" stroke="#77776a" stroke-width="1.3" fill-opacity="0.9"/>
<circle cx="1752.0" cy="984.0" r="7.5" fill="#f4f4f4" stroke="#77776a" stroke-width="1.3" fill-opacity="0.35"/>
<circle cx="1752.0" cy="994.0" r="7.5" fill="#ecebd2" stroke="#77776a" stroke-width="1.3" fill-opacity="0.9"/>
<circle cx="1752.0" cy="1004.0" r="7.5" fill="#ecebd2" stroke="#77776a" stroke-width="1.3" fill-opacity="0.9"/>
<circle cx="1222.0" cy="1440.0" r="7.5" fill="#f4f4f4" stroke="#77776a" stroke-width="1.3" fill-opacity="0.35"/>
<circle cx="1222.0" cy="1450.0" r="7.5" fill="#ecebd2" stroke="#77776a" stroke-width="1.3" fill-opacity="0.9"/>
<circle cx="1222.0" cy="1460.0" r="7.5" fill="#ecebd2" stroke="#77776a" stroke-width="1.3" fill-opacity="0.9"/>
<circle cx="1025.0" cy="745.0" r="7.5" fill="#f4f4f4" stroke="#77776a" stroke-width="1.3" fill-opacity="0.35"/>
<circle cx="1025.0" cy="755.0" r="7.5" fill="#ecebd2" stroke="#77776a" stroke-width="1.3" fill-opacity="0.9"/>
<circle cx="1025.0" cy="765.0" r="7.5" fill="#ecebd2" stroke="#77776a" stroke-width="1.3" fill-opacity="0.9"/>
<circle cx="1511.0" cy="760.0" r="7.5" fill="#f4f4f4" stroke="#77776a" stroke-width="1.3" fill-opacity="0.35"/>
<circle cx="1511.0" cy="770.0" r="7.5" fill="#ecebd2" stroke="#77776a" stroke-width="1.3" fill-opacity="0.9"/>
<circle cx="1511.0" cy="780.0" r="7.5" fill="#ecebd2" stroke="#77776a" stroke-width="1.3" fill-opacity="0.9"/>
<circle cx="985.0" cy="1195.0" r="7.5" fill="#f4f4f4" stroke="#77776a" stroke-width="1.3" fill-opacity="0.35"/>
<circle cx="985.0" cy="1205.0" r="7.5" fill="#ecebd2" stroke="#77776a" stroke-width="1.3" fill-opacity="0.9"/>
<circle cx="985.0" cy="1215.0" r="7.5" fill="#ecebd2" stroke="#77776a" stroke-width="1.3" fill-opacity="0.9"/>
<circle cx="1490.0" cy="1213.0" r="7.5" fill="#f4f4f4" stroke="#77776a" stroke-width="1.3" fill-opacity="0.35"/>
<circle cx="1490.0" cy="1223.0" r="7.5" fill="#ecebd2" stroke="#77776a" stroke-width="1.3" fill-opacity="0.9"/>
<circle cx="1490.0" cy="1233.0" r="7.5" fill="#ecebd2" stroke="#77776a" stroke-width="1.3" fill-opacity="0.9"/>
<circle cx="1254.0" cy="966.0" r="7.5" fill="#f4f4f4" stroke="#77776a" stroke-width="1.3" fill-opacity="0.35"/>
<circle cx="1254.0" cy="976.0" r="7.5" fill="#ecebd2" stroke="#77776a" stroke-width="1.3" fill-opacity="0.9"/>
<circle cx="1254.0" cy="986.0" r="7.5" fill="#ecebd2" stroke="#77776a" stroke-width="1.3" fill-opacity="0.9"/>
</g>
<g id="triad">
<path d="M737 927L665 851" stroke="#ff1010" stroke-width="13.5" stroke-linecap="round"/>
<path d="M641 823L677 843L657 862Z" fill="#ff1010"/>
<path d="M754 934L732 880" stroke="#1010ff" stroke-width="11.5" stroke-linecap="round"/>
<path d="M725 862L744 878L735 889L720 884Z" fill="#1414ff"/><circle cx="732" cy="880" r="12" fill="#1414ff"/>
<path d="M733 968L636 1044" stroke="#10f010" stroke-width="12"/>
<path d="M606 1067L629 1032L646 1053Z" fill="#14f014"/>
<circle cx="755.6" cy="947.7" r="11" fill="#e6ecf8" stroke="#808080" stroke-width="2.2"/>
<circle cx="761" cy="962" r="8" fill="none" stroke="#808080" stroke-width="1.5"/>
<circle cx="763" cy="969" r="8" fill="none" stroke="#909090" stroke-width="1.5"/>
<text x="611" y="810" font-size="23" font-weight="bold" fill="#ff1212">X</text>
<text x="713" y="856" font-size="23" font-weight="bold" fill="#1414ff">Z</text>
<text x="571" y="1095" font-size="23" font-weight="bold" fill="#14e014">Y</text>
<path d="M870 910L878 935L886 910Z" fill="#ff2a10"/><circle cx="878" cy="910" r="8" fill="#ff2a10"/>
<path d="M1270 610L1277 580L1284 610Z" fill="#30f010"/><ellipse cx="1277" cy="612" rx="9" ry="8" fill="#30f010"/>
</g>
<defs><linearGradient id="radg" x1="0" y1="0" x2="0" y2="1"><stop offset="0" stop-color="#ffffff"/><stop offset="1" stop-color="#aeb3c0"/></linearGradient><filter id="shadow" x="-20%" y="-50%" width="140%" height="200%"><feGaussianBlur in="SourceAlpha" stdDeviation="9"/><feOffset dy="6"/><feComponentTransfer><feFuncA type="linear" slope="0.22"/></feComponentTransfer><feMerge><feMergeNode/><feMergeNode in="SourceGraphic"/></feMerge></filter><filter id="cubesh" x="-50%" y="-50%" width="200%" height="200%"><feGaussianBlur stdDeviation="10"/></filter><linearGradient id="mdg" x1="0" y1="0" x2="0" y2="1"><stop offset="0" stop-color="#eceef2"/><stop offset="1" stop-color="#c3c8d1"/></linearGradient><linearGradient id="trg" x1="0" y1="0" x2="1" y2="1"><stop offset="0" stop-color="#cfcfcf"/><stop offset="0.6" stop-color="#111"/></linearGradient><linearGradient id="docg" x1="0" y1="0" x2="0" y2="1"><stop offset="0" stop-color="#fff"/><stop offset="1" stop-color="#c9ced8"/></linearGradient></defs>
<g id="nav">
<rect x="-2" y="174.5" width="592" height="47" fill="#f2f2f2"/><path d="M-2 175H590.5V221.5H-2" fill="none" stroke="#cfcfcf" stroke-width="1.3"/><path d="M-2 221.3H591.5M590.5 175V222" fill="none" stroke="#c6c6c6" stroke-width="2.2"/>
<path d="M2 199L12 193V205Z M11 199L21 193V205Z" fill="#2a2a2a"/>
<text x="43" y="206.3" font-size="23.2" fill="#555" textLength="134" lengthAdjust="spacingAndGlyphs">NAVEGADOR</text>
<circle cx="558.5" cy="199" r="8.8" fill="#2a2a2a"/><rect x="552.5" y="197.5" width="12" height="3" fill="#b8b8b8"/>
<rect x="64" y="234" width="286" height="40" fill="#f1f1f1" fill-opacity="0.96"/>
<rect x="100" y="282" width="236" height="40" fill="#f1f1f1" fill-opacity="0.96"/>
<rect x="100" y="330.2" width="284" height="40" fill="#f1f1f1" fill-opacity="0.96"/>
<rect x="100" y="378" width="205" height="40" fill="#f1f1f1" fill-opacity="0.96"/>
<rect x="100" y="426" width="230" height="40" fill="#f1f1f1" fill-opacity="0.96"/>
<rect x="100" y="474" width="302" height="40" fill="#f1f1f1" fill-opacity="0.96"/>
<rect x="136" y="522" width="394" height="40" fill="#f1f1f1" fill-opacity="0.96"/>
<rect x="136" y="570" width="394" height="40" fill="#f1f1f1" fill-opacity="0.96"/>
<rect x="136" y="618" width="402" height="40" fill="#f1f1f1" fill-opacity="0.96"/>
<path d="M42 247.5V260.5H28.5Z" fill="url(#trg)" stroke="#111" stroke-width="1.6" stroke-linejoin="round"/>
<g transform="translate(70 244)"><path d="M0 10Q16 -5 32 10Q16 25 0 10Z" fill="#9a9a9a"/><circle cx="16" cy="10" r="6.5" fill="#f2f2f2"/><circle cx="16" cy="10" r="3.8" fill="#9a9a9a"/></g>
<g transform="translate(122 239)" stroke="#4a4a4a" stroke-width="1.2" stroke-linejoin="round"><path d="M0.4 4.4H11.8V27.3H0.4Z" fill="url(#mdg)"/><path d="M0.4 4.4L3.6 0.5H15L11.8 4.4Z" fill="#eef0f3"/><path d="M11.8 4.4L15 0.5V13L11.8 16.4Z" fill="#b3b9c3"/><path d="M12.5 16.4H23.9V27.3H12.5Z" fill="url(#mdg)"/><path d="M12.5 16.4L15.7 12.6H27.7L23.9 16.4Z" fill="#eef0f3"/><path d="M23.9 16.4L27.7 12.6V23.5L23.9 27.3Z" fill="#b3b9c3"/><path d="M0.4 16H11.8" fill="none" stroke-width="0.8"/></g>
<text x="181.3" y="262.3" font-size="24" fill="#333" textLength="146.4" lengthAdjust="spacingAndGlyphs">prueba cnc v1</text>
<g transform="translate(107 286)"><path d="M2 1H17L25 9V26H2Z" fill="url(#docg)" stroke="#444" stroke-width="1.4"/><path d="M17 1V9H25" fill="#fff" stroke="#444" stroke-width="1.2"/><rect x="0" y="24" width="29" height="7" rx="1" fill="#f0c419" stroke="#b07800" stroke-width="1.2"/><path d="M4 24V27M8 24V26M12 24V27M16 24V26M20 24V27M24 24V26" stroke="#8a6000" stroke-width="1"/></g>
<text x="167.3" y="310.1" font-size="24" fill="#333" textLength="150" lengthAdjust="spacingAndGlyphs">Unidades: mm</text>
<path d="M66 343L77 350.5L66 358Z" fill="#fff" stroke="#222" stroke-width="1.8"/>
<g transform="translate(106 337)"><path d="M0 0H17L21 3H0Z" fill="#a0a0a0"/><path d="M0 5H13L17 2H32V26H0Z" fill="#9d9d9d"/></g>
<text x="166.4" y="357.8" font-size="24" fill="#333" textLength="196.6" lengthAdjust="spacingAndGlyphs">Vistas con nombre</text>
<path d="M66 391L77 398.5L66 406Z" fill="#fff" stroke="#222" stroke-width="1.8"/>
<g transform="translate(106 388)"><path d="M1 10Q16 -4 31 10Q16 24 1 10Z" fill="none" stroke="#a8a8a8" stroke-width="2.2"/><circle cx="16" cy="10" r="4.5" fill="none" stroke="#a8a8a8" stroke-width="2.2"/><path d="M6 1L26 20" stroke="#a8a8a8" stroke-width="2.2"/></g>
<g transform="translate(156 385)"><path d="M0 0H17L21 3H0Z" fill="#a0a0a0"/><path d="M0 5H13L17 2H32V26H0Z" fill="#9d9d9d"/></g>
<text x="217" y="405.6" font-size="24" fill="#333" textLength="70" lengthAdjust="spacingAndGlyphs">Origen</text>
<path d="M66 439L77 446.5L66 454Z" fill="#fff" stroke="#222" stroke-width="1.8"/>
<g transform="translate(106 436)"><path d="M0 10Q16 -5 32 10Q16 25 0 10Z" fill="#9a9a9a"/><circle cx="16" cy="10" r="6.5" fill="#f2f2f2"/><circle cx="16" cy="10" r="3.8" fill="#9a9a9a"/></g>
<g transform="translate(157 431)" stroke="#4a4a4a" stroke-width="1.2" stroke-linejoin="round"><path d="M0.4 4.4H11.8V27.3H0.4Z" fill="url(#mdg)"/><path d="M0.4 4.4L3.6 0.5H15L11.8 4.4Z" fill="#eef0f3"/><path d="M11.8 4.4L15 0.5V13L11.8 16.4Z" fill="#b3b9c3"/><path d="M12.5 16.4H23.9V27.3H12.5Z" fill="url(#mdg)"/><path d="M12.5 16.4L15.7 12.6H27.7L23.9 16.4Z" fill="#eef0f3"/><path d="M23.9 16.4L27.7 12.6V23.5L23.9 27.3Z" fill="#b3b9c3"/><path d="M0.4 16H11.8" fill="none" stroke-width="0.8"/></g>
<text x="217" y="453.3" font-size="24" fill="#333" textLength="87" lengthAdjust="spacingAndGlyphs">Modelos</text>
<path d="M79 487.5V500.5H65.5Z" fill="url(#trg)" stroke="#111" stroke-width="1.6" stroke-linejoin="round"/>
<g transform="translate(106 484)"><path d="M0 10Q16 -5 32 10Q16 25 0 10Z" fill="#9a9a9a"/><circle cx="16" cy="10" r="6.5" fill="#f2f2f2"/><circle cx="16" cy="10" r="3.8" fill="#9a9a9a"/></g>
<g transform="translate(156 479)"><path d="M1 24V3H13L15 6H26V14" stroke="#6b6b6b" stroke-width="1.8" fill="none"/><path d="M1 6H13" stroke="#6b6b6b" stroke-width="1"/><path d="M1 2H13L15 5H1Z" fill="#cfcfcf"/><path d="M1 24H13" stroke="#6b6b6b" stroke-width="1.8"/><path d="M13 22L21 17L29 22L21 27Z" fill="#bfe0f8"/><path d="M13 22L21 27V32L13 27Z" fill="#5aa7e4"/><path d="M29 22L21 27V32L29 27Z" fill="#3a86cc"/></g>
<text x="208.7" y="502" font-size="24" fill="#333" textLength="170.5" lengthAdjust="spacingAndGlyphs">Configuraciones</text>
<path d="M102 534L113 541.5L102 549Z" fill="#fff" stroke="#222" stroke-width="1.8"/>
<g transform="translate(142 532)"><path d="M0 10Q16 -5 32 10Q16 25 0 10Z" fill="#9a9a9a"/><circle cx="16" cy="10" r="6.5" fill="#f2f2f2"/><circle cx="16" cy="10" r="3.8" fill="#9a9a9a"/></g>
<circle cx="208" cy="542" r="12.8" fill="none" stroke="#6ab33e" stroke-width="2.4"/><path d="M201 542L206 548L215 536" fill="none" stroke="#6ab33e" stroke-width="3"/>
<g transform="translate(241 527)"><path d="M1 24V3H13L15 6H26V14" stroke="#6b6b6b" stroke-width="1.8" fill="none"/><path d="M1 6H13" stroke="#6b6b6b" stroke-width="1"/><path d="M1 2H13L15 5H1Z" fill="#cfcfcf"/><path d="M1 24H13" stroke="#6b6b6b" stroke-width="1.8"/><path d="M13 22L21 17L29 22L21 27Z" fill="#bfe0f8"/><path d="M13 22L21 27V32L13 27Z" fill="#5aa7e4"/><path d="M29 22L21 27V32L29 27Z" fill="#3a86cc"/></g>
<text x="294.5" y="550" font-size="24" fill="#333" textLength="161" lengthAdjust="spacingAndGlyphs">Configuración2</text>
<circle cx="501.8" cy="541.7" r="12.5" fill="url(#radg)" stroke="#3a3a3a" stroke-width="1.5"/>
<path d="M102 582L113 589.5L102 597Z" fill="#fff" stroke="#222" stroke-width="1.8"/>
<g transform="translate(142 580)"><path d="M0 10Q16 -5 32 10Q16 25 0 10Z" fill="#9a9a9a"/><circle cx="16" cy="10" r="6.5" fill="#f2f2f2"/><circle cx="16" cy="10" r="3.8" fill="#9a9a9a"/></g>
<circle cx="208" cy="590" r="12.8" fill="none" stroke="#6ab33e" stroke-width="2.4"/><path d="M201 590L206 596L215 584" fill="none" stroke="#6ab33e" stroke-width="3"/>
<g transform="translate(241 575)"><path d="M1 24V3H13L15 6H26V14" stroke="#6b6b6b" stroke-width="1.8" fill="none"/><path d="M1 6H13" stroke="#6b6b6b" stroke-width="1"/><path d="M1 2H13L15 5H1Z" fill="#cfcfcf"/><path d="M1 24H13" stroke="#6b6b6b" stroke-width="1.8"/><path d="M13 22L21 17L29 22L21 27Z" fill="#bfe0f8"/><path d="M13 22L21 27V32L13 27Z" fill="#5aa7e4"/><path d="M29 22L21 27V32L29 27Z" fill="#3a86cc"/></g>
<text x="294.5" y="597.8" font-size="24" fill="#333" textLength="161" lengthAdjust="spacingAndGlyphs">Configuración4</text>
<circle cx="501.8" cy="589.7" r="12.5" fill="url(#radg)" stroke="#3a3a3a" stroke-width="1.5"/>
<path d="M102 630L113 637.5L102 645Z" fill="#fff" stroke="#222" stroke-width="1.8"/>
<g transform="translate(142 628)"><path d="M0 10Q16 -5 32 10Q16 25 0 10Z" fill="#9a9a9a"/><circle cx="16" cy="10" r="6.5" fill="#f2f2f2"/><circle cx="16" cy="10" r="3.8" fill="#9a9a9a"/></g>
<path d="M194.4 650L220 624V650Z" fill="#f5a11c"/>
<g transform="translate(241 623)"><path d="M1 24V3H13L15 6H26V14" stroke="#6b6b6b" stroke-width="1.8" fill="none"/><path d="M1 6H13" stroke="#6b6b6b" stroke-width="1"/><path d="M1 2H13L15 5H1Z" fill="#cfcfcf"/><path d="M1 24H13" stroke="#6b6b6b" stroke-width="1.8"/><path d="M13 22L21 17L29 22L21 27Z" fill="#bfe0f8"/><path d="M13 22L21 27V32L13 27Z" fill="#5aa7e4"/><path d="M29 22L21 27V32L29 27Z" fill="#3a86cc"/></g>
<rect x="278" y="622" width="210" height="31.7" fill="#999999"/>
<text x="294.5" y="645.6" font-size="24" fill="#ffffff" font-weight="bold" textLength="170.5" lengthAdjust="spacingAndGlyphs">Configuración5</text>
<circle cx="510" cy="637.5" r="12.5" fill="url(#radg)" stroke="#3a3a3a" stroke-width="1.5"/>
<circle cx="510" cy="637.5" r="6" fill="#333"/>
</g>
<rect x="-2" y="1765" width="591" height="46" fill="#f1f1f1" stroke="#c6c6c6" stroke-width="2"/>
<text x="42.5" y="1796" font-size="23" fill="#555" textLength="155.5" lengthAdjust="spacingAndGlyphs">COMENTARIOS</text>
<circle cx="559.5" cy="1789" r="8.8" fill="#2a2a2a"/><rect x="554" y="1787.5" width="11" height="3" fill="#f1f1f1"/><rect x="558" y="1783.5" width="3" height="11" fill="#f1f1f1"/>
<g filter="url(#shadow)"><rect x="836.5" y="312" width="491" height="35" fill="#ececec" stroke="#a4a4a4" stroke-width="1.3"/></g><path d="M836 346.8H1328M1327.5 312V347" stroke="#8c8c8c" stroke-width="1.8"/>
<text x="844" y="341" font-size="27" fill="#111" textLength="472" lengthAdjust="spacingAndGlyphs">Origen de orientación de la herramienta</text>
<g id="toolbar">
<rect x="0" y="0" width="3004" height="166" fill="#f2f2f2"/>
<rect x="0" y="158.5" width="3004" height="1.6" fill="#cbcbcb"/>
<rect x="8.5" y="18.5" width="217" height="119" rx="9" fill="#f2f2f2" stroke="#c6c6c6" stroke-width="2"/>
<text x="31.5" y="83.6" font-size="22.7" fill="#333" stroke="#333" stroke-width="0.45" font-weight="bold" textLength="152.5" lengthAdjust="spacingAndGlyphs">FABRICACIÓN</text>
<path d="M196 74.5L208 74.5L202.0 81.5Z" fill="#333"/>
<text x="285.9" y="25.9" font-size="23.6" fill="#0696d7" stroke="#0696d7" stroke-width="0.45" font-weight="bold" textLength="101.8" lengthAdjust="spacingAndGlyphs">FRESADO</text>
<rect x="261" y="37" width="154" height="6" fill="#0696d7"/>
<text x="480.5" y="25.9" font-size="23.6" fill="#333333" stroke="#333333" stroke-width="0.45" textLength="120.2" lengthAdjust="spacingAndGlyphs">TORNEADO</text>
<text x="696" y="25.9" font-size="23.6" fill="#333333" stroke="#333333" stroke-width="0.45" textLength="89" lengthAdjust="spacingAndGlyphs">ADITIVO</text>
<text x="883" y="25.9" font-size="23.6" fill="#333333" stroke="#333333" stroke-width="0.45" textLength="126" lengthAdjust="spacingAndGlyphs">INSPECCIÓN</text>
<text x="1099" y="25.9" font-size="23.6" fill="#333333" stroke="#333333" stroke-width="0.45" textLength="142" lengthAdjust="spacingAndGlyphs">FABRICACIÓN</text>
<text x="1334" y="25.9" font-size="23.6" fill="#333333" stroke="#333333" stroke-width="0.45" textLength="124" lengthAdjust="spacingAndGlyphs">UTILIDADES</text>
<text x="263.8" y="146.8" font-size="22.6" fill="#333333" stroke="#333333" stroke-width="0.45" textLength="179.5" lengthAdjust="spacingAndGlyphs">CONFIGURACIÓN</text>
<path d="M450.4 134.5L461.9 134.5L456.15 142Z" fill="#333"/>
<text x="607.8" y="146.8" font-size="22.6" fill="#333333" stroke="#333333" stroke-width="0.45" textLength="29.2" lengthAdjust="spacingAndGlyphs">2D</text>
<path d="M642 134.5L653.5 134.5L647.75 142Z" fill="#333"/>
<text x="932.5" y="146.8" font-size="22.6" fill="#333333" stroke="#333333" stroke-width="0.45" textLength="27.5" lengthAdjust="spacingAndGlyphs">3D</text>
<path d="M966.6 134.5L978.1 134.5L972.35 142Z" fill="#333"/>
<text x="1168" y="146.8" font-size="22.6" fill="#333333" stroke="#333333" stroke-width="0.45" textLength="133" lengthAdjust="spacingAndGlyphs">TALADRADO</text>
<path d="M1308 134.5L1319.5 134.5L1313.75 142Z" fill="#333"/>
<text x="1375" y="146.8" font-size="22.6" fill="#333333" stroke="#333333" stroke-width="0.45" textLength="114.6" lengthAdjust="spacingAndGlyphs">MULTI EJES</text>
<path d="M1496 134.5L1507.5 134.5L1501.75 142Z" fill="#333"/>
<text x="1652" y="146.8" font-size="22.6" fill="#333333" stroke="#333333" stroke-width="0.45" textLength="119.5" lengthAdjust="spacingAndGlyphs">MODIFICAR</text>
<path d="M1778.6 134.5L1790.1 134.5L1784.35 142Z" fill="#333"/>
<text x="1981" y="146.8" font-size="22.6" fill="#333333" stroke="#333333" stroke-width="0.45" textLength="108" lengthAdjust="spacingAndGlyphs">ACCIONES</text>
<path d="M2096 134.5L2107.5 134.5L2101.75 142Z" fill="#333"/>
<text x="2283" y="146.8" font-size="22.6" fill="#333333" stroke="#333333" stroke-width="0.45" textLength="147" lengthAdjust="spacingAndGlyphs">ADMINISTRAR</text>
<path d="M2437.6 134.5L2449.1 134.5L2443.35 142Z" fill="#333"/>
<text x="2583.8" y="146.8" font-size="22.6" fill="#333333" stroke="#333333" stroke-width="0.45" textLength="156" lengthAdjust="spacingAndGlyphs">INSPECCIONAR</text>
<path d="M2746.7 134.5L2758.2 134.5L2752.45 142Z" fill="#333"/>
<text x="2812" y="146.8" font-size="22.6" fill="#333333" stroke="#333333" stroke-width="0.45" textLength="145" lengthAdjust="spacingAndGlyphs">SELECCIONAR</text>
<path d="M2964 134.5L2975.5 134.5L2969.75 142Z" fill="#333"/>
<rect x="491" y="49" width="2" height="101" fill="#c9c9c9"/>
<rect x="771" y="49" width="2" height="101" fill="#c9c9c9"/>
<rect x="1137" y="49" width="2" height="101" fill="#c9c9c9"/>
<rect x="1345" y="49" width="2" height="101" fill="#c9c9c9"/>
<rect x="1540" y="49" width="2" height="101" fill="#c9c9c9"/>
<rect x="1907" y="49" width="2" height="101" fill="#c9c9c9"/>
<rect x="2187" y="49" width="2" height="101" fill="#c9c9c9"/>
<rect x="2553" y="49" width="2" height="101" fill="#c9c9c9"/>
<rect x="2781" y="49" width="2" height="101" fill="#c9c9c9"/>
</g>
<g transform="translate(290 52) scale(1)"><path d="M25.2 6.5H55.2V29.6M0.7 11.3V47.2H30" fill="none" stroke="#5c5c5c" stroke-width="2.3"/><path d="M0.7 0.6H19.7L25.2 6.5L20 11.3H0.7Z" fill="#d2d2d2" stroke="#5c5c5c" stroke-width="2.2"/><path d="M32.4 38.2L48 47.9V60L32.4 50Z" fill="#6ab0e6"/><path d="M63.5 38.2L48 47.9V60L63.5 50Z" fill="#4a93d0"/><path d="M32.4 50L48 60L63.5 50" fill="none" stroke="#3a7ab8" stroke-width="1.2"/><path d="M32.4 38.2L48 28.6L63.5 38.2L48 47.9Z" fill="#f4f4f4"/><path d="M32.4 38.2L48 28.6L63.5 38.2" fill="none" stroke="#5c5c5c" stroke-width="2.3"/></g>
<g transform="translate(380 50) scale(1)"><rect x="1.1" y="0.6" width="51.7" height="62.4" fill="none" stroke="#5c5c5c" stroke-width="2.2"/><text x="19.7" y="27.8" font-size="25" font-weight="bold" fill="#1e8fe0" textLength="14.5" lengthAdjust="spacingAndGlyphs">G</text><rect x="8.3" y="36.4" width="5.6" height="5.2" fill="#666"/><rect x="8.3" y="48.2" width="5.6" height="5.5" fill="#666"/><path d="M16.3 39H48M16.3 51H48" stroke="#5c5c5c" stroke-width="2"/></g>
<g transform="translate(516 50) scale(1)"><path d="M0.4 29V37.5L32 61.2L63.7 37.5V29L32 52.6Z" fill="#d6d6d6"/><path d="M0.4 29L32 52.6V61.2L0.4 37.5Z" fill="#e6e6e6"/><path d="M0.4 29V37.5L32 61.2L63.7 37.5V29" fill="none" stroke="#6b6b6b" stroke-width="2.2" stroke-linejoin="round"/><path d="M2 29L32 51L62 29" fill="none" stroke="#fafafa" stroke-width="2"/><path d="M0.4 26.4L32 2.1L63.7 26.4L32 50.1Z" fill="#67aee6"/><path d="M1 33.3L44 1.8C50 -2.5 57 3 49.4 12.7L8.3 44.9C3 49 8 56 15.7 51.7L59.4 20.1" fill="none" stroke="#0b3a66" stroke-width="3"/></g>
<g transform="translate(602 50) scale(1)"><path d="M32 0.6L63.6 24.3V39.6L32 63.3L0.4 39.6V24.3Z" fill="#f3f3f3" stroke="#6b6b6b" stroke-width="2.3" stroke-linejoin="round"/><path d="M4 27L7.7 30V37L4 34Z" fill="#dcdcdc"/><path d="M60 27L56.3 30V37L60 34Z" fill="#c4c4c4"/><path d="M7.7 30C18 22 24 17 32 17C40 17 46 22 56.3 30V36C46 28 40 22 32 22C24 22 18 28 7.7 36Z" fill="#c9c9c9"/><path d="M4 40L32 60L60 40" fill="none" stroke="#e0e0e0" stroke-width="3"/><path d="M8.2 38L26 26C30 23 34 23 38 26L55.7 38L32 56Z" fill="#67aee6"/><path d="M13 41C20 35 26 30 31 30C36 30 40 34 44 36C46 37 48 37 50 37M13 41C20 44 28 47 34 46C40 45 45 42 50 38M25 34C28 37 32 39 40 39" fill="none" stroke="#0b3a66" stroke-width="2.6"/></g>
<g transform="translate(689 50) scale(1)"><path d="M0.4 33.3L31 9L61.6 33.3L31 58.6Z" fill="none" stroke="#1e8fe0" stroke-width="2.6"/><path d="M9.3 22.2L31 39.6V51.7L9.3 33.3Z" fill="#6ab2ea"/><path d="M52.6 22.2L31 39.6V51.7L52.6 33.3Z" fill="#4a93d4"/><path d="M9.3 22.2L31 4.8L52.6 22.2L31 39.6Z" fill="#f4f4f4" stroke="#6b6b6b" stroke-width="2.2" stroke-linejoin="round"/></g>
<g transform="translate(798 50) scale(1)"><path d="M0.3 18.2L16.2 2.3H59.6V45.8L43.8 61.6H0.3Z" fill="#dcdcdc"/><path d="M0.3 18.2L16.2 2.3H59.6L52 10.6H21.7L10 18.2Z" fill="#f4f4f4"/><path d="M59.6 2.3V45.8L43.8 61.6V47.1L52 40V10.6Z" fill="#bdbdbd"/><path d="M10 47.1H43.8L52 41L43.8 47.1L43.8 61.6L40 55H10Z" fill="#f0f0f0"/><path d="M14.1 18.2L21.7 10.6H52V41.6L43.8 47.1H21.7Z" fill="#6ab0e6"/><path d="M14.1 18.2L21.7 10.6L24.4 20.2L29.3 39.5L21.7 47.1Z" fill="#4a90d0"/><path d="M21.7 47.1L29.3 41.6H52L43.8 47.1Z" fill="#93caf3"/><path d="M0.3 18.2L16.2 2.3H59.6V45.8L43.8 61.6H0.3Z" fill="none" stroke="#6b6b6b" stroke-width="2.2" stroke-linejoin="round"/><path d="M12.7 32.6L24.4 20.9H54.1M19 24.5Q30 23 39 20.9M12.7 45.1L24.4 34H54.1M19.6 38.9Q30 37 38.9 34" fill="none" stroke="#0b3a66" stroke-width="2.6"/></g>
<g transform="translate(882 50) scale(1)"><path d="M0.5 34L26 52V58.9L0.5 41Z" fill="#e6e6e6"/><path d="M26 52L63.3 25V34L26 58.9Z" fill="#d2d2d2"/><path d="M0.5 34Q20 22 36 8L63.3 25L26 52Z" fill="#c3dbf0"/><path d="M8 35L30 21L48 33L26 47Z" fill="none" stroke="#9cb8d2" stroke-width="2.2"/><path d="M16 35L30 26L40 33L26 42Z" fill="#b4d0ea" stroke="#9cb8d2" stroke-width="2"/><circle cx="47.5" cy="16" r="16" fill="#0f93d6"/><g transform="translate(49.0 14.5) rotate(45)"><path d="M-8 -3H8V2Q8 10 0 10Q-8 10 -8 2Z" fill="#fff"/><rect x="-5.8" y="-11" width="3.4" height="8.5" rx="1.2" fill="#fff"/><rect x="2.4" y="-11" width="3.4" height="8.5" rx="1.2" fill="#fff"/><path d="M0 9V21" stroke="#fff" stroke-width="3.6"/></g></g>
<g transform="translate(968 50) scale(1)"><path d="M0.7 46.4H33.8V58.9H0.7Z" fill="#dcdcdc"/><path d="M14.5 18.2H48.3V31.3L33.8 46.4H14.5Z" fill="#dcdcdc"/><path d="M48.3 18.2L61.4 6.4V31.3L33.8 58.9V46.4L48.3 31.3Z" fill="#bdbdbd"/><path d="M2 46L11 34H46L34 46Z" fill="#f4f4f4"/><path d="M16 18L24 10H58L48 18Z" fill="#f4f4f4"/><path d="M19.3 14.7L27.6 4.4H58.7L48.3 14.7Z" fill="#6ab0e6"/><path d="M2.8 43L11 32H44.9L33.8 43Z" fill="#6ab0e6"/><path d="M14.5 18.2V29.9M0.7 46.4V58.9H33.8L61.4 31.3V6.4" fill="none" stroke="#6b6b6b" stroke-width="2.2" stroke-linejoin="round"/><path d="M20 7.1H63.5M13.8 12.6H57.3M6.2 34.7H49.7M0 40.9H43.5" stroke="#0b3a66" stroke-width="2.5"/></g>
<g transform="translate(1055 50) scale(1)"><path d="M1.3 41.6H46.2V58.9H1.3Z" fill="#dedede"/><path d="M8.9 9.2L17.2 0.2H62.1L56 8Z" fill="#f4f4f4"/><path d="M46.2 58.9L62.1 41.6V0.2L58 8Q49 18 46 30V42Z" fill="#bdbdbd"/><path d="M1.3 41.6V25.7Q1.3 12 10 12H47Q55 10 58 8Q49 18 46 30V41.6Z" fill="#6ab0e6"/><path d="M1.3 44.4V58.9H46.2L62.1 41.6V0.2H17.2L8.9 9.2" fill="none" stroke="#6b6b6b" stroke-width="2.2" stroke-linejoin="round"/><path d="M0.7 54.7C8 52 13 46 15 30C17 15 23 5 29 7C35 9 32 20 28 34C25 46 24 53 30 53C36 53 39 44 41 34C44 18 50 10 58 8" fill="none" stroke="#0b3a66" stroke-width="2.5"/></g>
<g transform="translate(1168 50) scale(1)"><rect x="22.4" y="40" width="20.7" height="22.9" rx="10" fill="#9c9c9c" stroke="#5c5c5c" stroke-width="2"/><path d="M24 52L42 44M24 60L42 52" stroke="#d6d6d6" stroke-width="3.5"/><path d="M0.1 37L18.7 16.2H63.8L45.3 37Z" fill="#f4f4f4"/><path d="M0.1 37H45.3V47.3H0.1Z" fill="#dedede"/><path d="M45.3 37L63.8 16.2V28L45.3 47.3Z" fill="#c4c4c4"/><path d="M0.1 37L18.7 16.2H63.8V28L45.3 47.3H0.1Z" fill="none" stroke="#5c5c5c" stroke-width="2.2" stroke-linejoin="round"/><path d="M22.4 9V24Q22.4 29.5 32.7 29.5Q43.1 29.5 43.1 24V9Z" fill="#9c9c9c" stroke="#5c5c5c" stroke-width="2"/><path d="M23 20L42 12M23 28L42 20" stroke="#d6d6d6" stroke-width="3.5"/><ellipse cx="32.7" cy="9" rx="10.3" ry="4.6" fill="#efefef" stroke="#5c5c5c" stroke-width="2"/><path d="M23.1 27.3V46.6M42.4 27.3V46.6" stroke="#1e8fe0" stroke-width="1.8"/></g>
<g transform="translate(1256 50) scale(1)"><path d="M21 45H41.7V55L31 61.4L21 55Z" fill="#e0e0e0" stroke="#bdbdbd" stroke-width="1.5"/><path d="M24 58L40 47" stroke="#c8c8c8" stroke-width="3"/><path d="M1 33.2L16.6 18.4H60.2L45.4 33.2Z" fill="#f2f2f2"/><path d="M1 33.2H45.4V45.1H1Z" fill="#e6e6e6" stroke="#c4c4c4" stroke-width="1.3"/><path d="M45.4 33.2L60.2 18.4V31.8L45.4 45.1Z" fill="#d4d4d4"/><ellipse cx="30" cy="28" rx="12" ry="5" fill="#cfe0f0"/><path d="M21 6V26Q21 29 31 29Q41 29 41 26V6Z" fill="#e8e8e8" stroke="#c4c4c4" stroke-width="1.5"/><ellipse cx="31" cy="6" rx="10" ry="3.5" fill="#f6f6f6" stroke="#c4c4c4" stroke-width="1.3"/><path d="M1.5 9.9H15.5M8.5 2.5V17.5" stroke="#f0a2a2" stroke-width="3"/><circle cx="46.2" cy="16.2" r="15.5" fill="#0f93d6"/><g transform="translate(47.7 14.7) rotate(45)"><path d="M-8 -3H8V2Q8 10 0 10Q-8 10 -8 2Z" fill="#fff"/><rect x="-5.8" y="-11" width="3.4" height="8.5" rx="1.2" fill="#fff"/><rect x="2.4" y="-11" width="3.4" height="8.5" rx="1.2" fill="#fff"/><path d="M0 9V21" stroke="#fff" stroke-width="3.6"/></g></g>
<g transform="translate(1369 50) scale(1)"><rect x="1.3" y="19.2" width="21" height="20.7" fill="#b9d6ee"/><path d="M1.3 19.5H22" stroke="#c8c8c8" stroke-width="2"/><path d="M26.5 42.9L36.8 60.6L64.2 34V18L45 28Z" fill="#bad6ee"/><path d="M36.8 60.6L64.2 34V18L50 38Z" fill="#dedede"/><path d="M22 6Q28 2 34 6L24 50Q20 56 14 52Q10 48 12 44Z" fill="#dcdcdc" stroke="#bdbdbd" stroke-width="1.5"/><path d="M14 40L26 34M17 28L28 22" stroke="#c4c4c4" stroke-width="3"/><circle cx="48.7" cy="15.5" r="15.5" fill="#0f93d6"/><g transform="translate(50.2 14.0) rotate(45)"><path d="M-8 -3H8V2Q8 10 0 10Q-8 10 -8 2Z" fill="#fff"/><rect x="-5.8" y="-11" width="3.4" height="8.5" rx="1.2" fill="#fff"/><rect x="2.4" y="-11" width="3.4" height="8.5" rx="1.2" fill="#fff"/><path d="M0 9V21" stroke="#fff" stroke-width="3.6"/></g></g>
<g transform="translate(1457 50) scale(1)"><ellipse cx="15" cy="23.6" rx="13.5" ry="19" fill="#ebebeb" stroke="#bdbdbd" stroke-width="1.8"/><path d="M18 28L40 16L58 40Q60 48 54 54L40 60Q32 62 28 56L16 38Z" fill="#c3ddf2"/><ellipse cx="31" cy="37" rx="8" ry="11" transform="rotate(-35 31 37)" fill="none" stroke="#9ab6ce" stroke-width="2.4"/><ellipse cx="31" cy="37" rx="4" ry="6" transform="rotate(-35 31 37)" fill="none" stroke="#9ab6ce" stroke-width="2"/><circle cx="43.6" cy="16.2" r="15" fill="#0f93d6"/><g transform="translate(45.1 14.7) rotate(45)"><path d="M-8 -3H8V2Q8 10 0 10Q-8 10 -8 2Z" fill="#fff"/><rect x="-5.8" y="-11" width="3.4" height="8.5" rx="1.2" fill="#fff"/><rect x="2.4" y="-11" width="3.4" height="8.5" rx="1.2" fill="#fff"/><path d="M0 9V21" stroke="#fff" stroke-width="3.6"/></g></g>
<g transform="translate(1568 50) scale(1)"><path d="M1 4.8H33.4" stroke="#a9cbe8" stroke-width="2.2"/><path d="M12 10L18.2 16H12Z" fill="#a8a8a8"/><path d="M18.9 34.7H10Q1 34.7 1 26.5Q1 18.8 10 18.8H32M41.7 32.6H59" fill="none" stroke="#a9cbe8" stroke-width="2.2"/><path d="M13 21L35 41M40 22L33 34" stroke="#a8a8a8" stroke-width="4.5"/><ellipse cx="32" cy="52" rx="5.5" ry="8.5" transform="rotate(10 32 52)" fill="none" stroke="#a8a8a8" stroke-width="3.6"/><ellipse cx="47" cy="45.5" rx="8.5" ry="5.5" transform="rotate(30 47 45.5)" fill="none" stroke="#a8a8a8" stroke-width="3.6"/><circle cx="45.8" cy="15.4" r="15.5" fill="#0f93d6"/><g transform="translate(47.3 13.9) rotate(45)"><path d="M-8 -3H8V2Q8 10 0 10Q-8 10 -8 2Z" fill="#fff"/><rect x="-5.8" y="-11" width="3.4" height="8.5" rx="1.2" fill="#fff"/><rect x="2.4" y="-11" width="3.4" height="8.5" rx="1.2" fill="#fff"/><path d="M0 9V21" stroke="#fff" stroke-width="3.6"/></g></g>
<g transform="translate(1654 50) scale(1)"><path d="M0.5 38.9L31.6 56.1" stroke="#a9cbe8" stroke-width="2.3"/><path d="M20.5 3L31 8.5M30.9 41L12 30Q6 26 10 20Q14 15 20 18L50 36" fill="none" stroke="#a9cbe8" stroke-width="2.3"/><path d="M36 38.5L60.5 62M60.5 38.5L36 62" stroke="#eba4a4" stroke-width="5.5"/><circle cx="46" cy="15.4" r="15.5" fill="#0f93d6"/><g transform="translate(47.5 13.9) rotate(45)"><path d="M-8 -3H8V2Q8 10 0 10Q-8 10 -8 2Z" fill="#fff"/><rect x="-5.8" y="-11" width="3.4" height="8.5" rx="1.2" fill="#fff"/><rect x="2.4" y="-11" width="3.4" height="8.5" rx="1.2" fill="#fff"/><path d="M0 9V21" stroke="#fff" stroke-width="3.6"/></g></g>
<g transform="translate(1740 50) scale(1)"><rect x="0.1" y="4.4" width="23.5" height="15" fill="#dedede"/><rect x="12" y="4.4" width="11.6" height="15" fill="#d2d2d2"/><rect x="4.2" y="19.5" width="15.2" height="4.2" fill="#c8c8c8"/><rect x="6.3" y="23.7" width="11.7" height="17.3" rx="3" fill="#d2d2d2"/><path d="M7 36L17 28" stroke="#e6e6e6" stroke-width="3"/><rect x="42.2" y="28" width="11.7" height="23.3" rx="3" fill="#d2d2d2"/><path d="M43 46L53 38" stroke="#e6e6e6" stroke-width="3"/><path d="M12.5 52H39.4M12.5 52L17 48M12.5 52L17 56M39.4 52L35 48M39.4 52L35 56" fill="none" stroke="#a9cbe8" stroke-width="2"/><circle cx="46.3" cy="15.4" r="15.5" fill="#0f93d6"/><g transform="translate(47.8 13.9) rotate(45)"><path d="M-8 -3H8V2Q8 10 0 10Q-8 10 -8 2Z" fill="#fff"/><rect x="-5.8" y="-11" width="3.4" height="8.5" rx="1.2" fill="#fff"/><rect x="2.4" y="-11" width="3.4" height="8.5" rx="1.2" fill="#fff"/><path d="M0 9V21" stroke="#fff" stroke-width="3.6"/></g></g>
<g transform="translate(1824 50) scale(1)"><circle cx="14.1" cy="14" r="7.5" fill="none" stroke="#bdbdbd" stroke-width="3.2"/><path d="M14.1 1V6.5M14.1 21.5V27M1 14H6.6M21.6 14H27" stroke="#bdbdbd" stroke-width="3.2"/><path d="M23.7 23.7L36 35" stroke="#a9cbe8" stroke-width="3.5"/><path d="M38.2 36.8L30 35L36 29Z" fill="#a9cbe8"/><circle cx="50" cy="50" r="7.5" fill="none" stroke="#a9cbe8" stroke-width="3.2"/><path d="M50 37V42.5M50 57.5V63M37 50H42.5M57.5 50H63" stroke="#a9cbe8" stroke-width="3.2"/><circle cx="47.9" cy="15.4" r="15.5" fill="#0f93d6"/><g transform="translate(49.4 13.9) rotate(45)"><path d="M-8 -3H8V2Q8 10 0 10Q-8 10 -8 2Z" fill="#fff"/><rect x="-5.8" y="-11" width="3.4" height="8.5" rx="1.2" fill="#fff"/><rect x="2.4" y="-11" width="3.4" height="8.5" rx="1.2" fill="#fff"/><path d="M0 9V21" stroke="#fff" stroke-width="3.6"/></g></g>
<g transform="translate(1936 50) scale(1)"><path d="M26.6 8.7L0.7 34.1L26.6 60.5M29.6 21.4L17.9 34.1L26.6 43.2M42.3 20.9L55.5 34.1L51.9 36.6" fill="none" stroke="#1e8fe0" stroke-width="2.2"/><rect x="30.6" y="9" width="11.2" height="28" rx="5" fill="#a8a8a8" stroke="#5c5c5c" stroke-width="1.8"/><path d="M31.5 20L41 15M31.5 29L41 24" stroke="#d8d8d8" stroke-width="2.5"/><rect x="26.6" y="0.8" width="18.7" height="9.9" rx="4" fill="#e2e2e2" stroke="#5c5c5c" stroke-width="1.8"/><path d="M28.6 62V44Q28.6 39.2 33 39.2H55Q59.5 39.2 59.5 44V62Z" fill="#e6e6e6" stroke="#6a6a6a" stroke-width="1.3"/><rect x="37.2" y="42.2" width="12.7" height="16.3" fill="#a6c8ee" stroke="#7a9cc8" stroke-width="1"/><rect x="39.8" y="47.8" width="7.6" height="5.6" fill="#dedede" stroke="#7a8aa8" stroke-width="0.8"/><rect x="52.4" y="48.3" width="5.1" height="8.1" fill="#b6d4f0" stroke="#7a9cc8" stroke-width="0.8"/><rect x="53" y="49.5" width="1.8" height="1.8" fill="#e0103a"/><rect x="29.1" y="57.9" width="29.9" height="5.6" fill="#1f5a8f"/></g>
<g transform="translate(2022 50) scale(1)"><rect x="0.9" y="1.1" width="51.8" height="61.9" fill="none" stroke="#5c5c5c" stroke-width="2"/><text x="13.1" y="30" font-size="25" font-weight="bold" fill="#1e8fe0" textLength="29" lengthAdjust="spacingAndGlyphs">G1</text><text x="13.1" y="52.4" font-size="25" font-weight="bold" fill="#1e8fe0" textLength="29" lengthAdjust="spacingAndGlyphs">G2</text></g>
<g transform="translate(2112 50) scale(1)"><rect x="1.2" y="3" width="46" height="56.2" fill="none" stroke="#5c5c5c" stroke-width="2"/><rect x="10.9" y="10.7" width="26.4" height="10.7" fill="none" stroke="#5c5c5c" stroke-width="1.8"/><path d="M10.4 31H37.8M10.4 40.7H37.8M10.4 50.8H37.8" stroke="#5c5c5c" stroke-width="1.8"/></g>
<g transform="translate(2212 50) scale(1)"><rect x="0" y="0.5" width="12" height="15.2" fill="#dcdcdc"/><rect x="12" y="0.5" width="11.7" height="15.2" fill="#bdbdbd"/><rect x="0" y="0.5" width="23.7" height="15.2" fill="none" stroke="#a8a8a8" stroke-width="1.2"/><rect x="10.6" y="15.7" width="3.2" height="25" fill="#777"/><circle cx="11.8" cy="43.7" r="4.2" fill="#ee1c25"/><rect x="24.4" y="8" width="17.5" height="45.5" fill="#c4c4c4" stroke="#a8a8a8" stroke-width="1.2"/><path d="M23.7 43.7L36.3 40.2L32.8 51.4L20.2 55.6Z" fill="#f5a40e" stroke="#c98300" stroke-width="1"/><circle cx="28" cy="47.8" r="1.8" fill="#666"/><rect x="40.5" y="16.4" width="12" height="15.4" fill="#dcdcdc"/><rect x="52.5" y="16.4" width="11.1" height="15.4" fill="#bdbdbd"/><rect x="40.5" y="16.4" width="23.1" height="15.4" fill="none" stroke="#a8a8a8" stroke-width="1.2"/><rect x="44.7" y="31.8" width="14.7" height="4.2" fill="#777"/><rect x="46.1" y="36" width="11.9" height="27.3" rx="4" fill="#8f8f8f"/><path d="M46.5 46L57.5 40M46.5 55L57.5 49" stroke="#d0d0d0" stroke-width="3"/></g>
<g transform="translate(2298 50) scale(1)"><path d="M0.7 48.6V16.4L7.7 9.4H53.9L63.7 16.4V48.6Z" fill="#e4e4e4" stroke="#666" stroke-width="2"/><path d="M2 16.4L8.5 10.5H53.5L62.5 16.4Z" fill="#f8f8f8"/><rect x="18.2" y="15" width="25.2" height="33.6" fill="#a6c8ee" stroke="#7a9cc8" stroke-width="1.8"/><rect x="22.4" y="24.1" width="16.8" height="13.3" fill="#dcdcdc" stroke="#7a9cc8" stroke-width="1.8"/><rect x="48.3" y="26.2" width="11.2" height="17.5" fill="#dbe8f5" stroke="#7a9cc8" stroke-width="1.2"/><rect x="48.3" y="26.2" width="11.2" height="7" fill="#b6d4f0"/><circle cx="51.8" cy="36" r="2" fill="#d0103a"/><rect x="55" y="35.5" width="2" height="1.6" fill="#1e8fe0"/><rect x="53.5" y="40" width="3.5" height="1.5" fill="#1e8fe0"/><rect x="2.1" y="47.2" width="59.5" height="8.4" fill="#1f5a8f" stroke="#666" stroke-width="1.5"/></g>
<g transform="translate(2389 50) scale(1)"><path d="M1 1H27.3V51.4H1Z" fill="#f2f2f2" stroke="#5c5c5c" stroke-width="2"/><path d="M6.6 6.6H32.9V57.7H6.6Z" fill="#f2f2f2" stroke="#5c5c5c" stroke-width="2"/><path d="M12.6 12.9H39.2L54.6 27.6V63.3H12.6Z" fill="#f2f2f2" stroke="#5c5c5c" stroke-width="2.2"/><path d="M39.2 12.9V27.6H54.6Z" fill="#666"/><text x="25.9" y="51.4" font-size="24" font-weight="bold" fill="#1e8fe0" textLength="14.7" lengthAdjust="spacingAndGlyphs">G</text></g>
<g transform="translate(2475 50) scale(1)"><path d="M1 1H27.3V51.4H1Z" fill="#f2f2f2" stroke="#5c5c5c" stroke-width="2"/><path d="M6.6 6.6H32.9V57.7H6.6Z" fill="#f2f2f2" stroke="#5c5c5c" stroke-width="2"/><path d="M12.6 12.9H39.2L54.6 27.6V63.3H12.6Z" fill="#f2f2f2" stroke="#5c5c5c" stroke-width="2.2"/><path d="M39.2 12.9V27.6H54.6Z" fill="#666"/><path d="M18.3 43.7L35 52.5Q40 55 40 50Q40 47 36 44.5L24 37Q19 34 22 31Q24 29 28 31L48.4 42.3" fill="none" stroke="#1e8fe0" stroke-width="2.3"/></g>
<g transform="translate(2642 66) scale(1)"><path d="M1 0V18M55 0V18" stroke="#666" stroke-width="2"/><path d="M2 9H54" stroke="#666" stroke-width="2"/><path d="M2 9L10 5V13ZM54 9L46 5V13Z" fill="#666"/><rect x="0" y="20" width="56" height="12" fill="#f5a40e" stroke="#d28c00" stroke-width="1"/><path d="M6 20V24M12 20V26M18 20V24M24 20V26M30 20V24M36 20V26M42 20V24M48 20V26" stroke="#555" stroke-width="1.5"/></g>
<g transform="translate(2860 50) scale(1)"><rect x="1.5" y="1.5" width="53" height="42" fill="none" stroke="#1fb04a" stroke-width="2.5" stroke-dasharray="7.5 4.5" stroke-dashoffset="-1"/><path d="M40 28V58L47 51L53 63L58 60L52 48L62 48Z" fill="#f8f8f8" stroke="#333" stroke-width="2.2" stroke-linejoin="round"/></g>
<defs><linearGradient id="cbg" x1="0" y1="0" x2="0" y2="1"><stop offset="0" stop-color="#f4f4f4"/><stop offset="1" stop-color="#c9c9c9"/></linearGradient></defs>
<g id="dialog">
<rect x="2007.5" y="341" width="741" height="47" fill="#f1f1f1" stroke="#c8c8c8" stroke-width="2"/>
<circle cx="2027" cy="365" r="9" fill="#2a2a2a"/><rect x="2021" y="363.5" width="12" height="3" fill="#f1f1f1"/>
<text x="2056.5" y="372.3" font-size="23.3" fill="#555" textLength="239.5" lengthAdjust="spacingAndGlyphs">TALADRO : TALADRO1</text>
<rect x="2007" y="390" width="742" height="1144" fill="#f1f1f1" stroke="#c8c8c8" stroke-width="2"/>
<path d="M2009 444H2748" stroke="#c4c4c4" stroke-width="2.5"/>
<path d="M2066 444V394H2124V444" fill="#f1f1f1" stroke="#c4c4c4" stroke-width="2"/><rect x="2067" y="440" width="56" height="6" fill="#f1f1f1"/>
<rect x="2181" y="396" width="2" height="46" fill="#c8c8c8"/>
<rect x="2239" y="396" width="2" height="46" fill="#c8c8c8"/>
<rect x="2296.6" y="396" width="2" height="46" fill="#c8c8c8"/>
<g transform="translate(2029 405)"><ellipse cx="10" cy="5" rx="10" ry="5" fill="#eee" stroke="#444" stroke-width="1.6"/><path d="M3 7V24L10 33L17 24V7" fill="#ddd" stroke="#444" stroke-width="1.6"/><path d="M4 20L16 12M4 28L16 20" stroke="#444" stroke-width="2"/></g>
<g transform="translate(2081 403)"><path d="M14 8L20 2H31V21L25 27H14Z" fill="#8cc4ee" stroke="#444" stroke-width="1.4"/><path d="M14 8H25V27M25 8L31 2" fill="none" stroke="#444" stroke-width="1.2"/><path d="M0 19L6 13H17V32L11 38H0Z" fill="#f2f2f2" stroke="#444" stroke-width="1.4"/><path d="M0 19H11V38M11 19L17 13" fill="none" stroke="#444" stroke-width="1.2"/></g>
<g transform="translate(2139 405)"><path d="M2 12L8 4H27L21 12Z" fill="#f3a51e" stroke="#b47400" stroke-width="1.3"/><path d="M2 12H21V34H2Z" fill="#f2f2f2" stroke="#444" stroke-width="1.4"/><path d="M21 12L27 6V28L21 34Z" fill="#cfcfcf" stroke="#444" stroke-width="1.4"/></g>
<g transform="translate(2196 405)"><path d="M2 1V31H30V1" fill="none" stroke="#444" stroke-width="2.2"/><rect x="6" y="10" width="20" height="4" fill="#3d8fd6"/><rect x="6" y="18" width="20" height="4" fill="#3d8fd6"/><path d="M2 4H30" stroke="#444" stroke-width="1.5"/></g>
<g transform="translate(2254 405)"><path d="M1 12V1H31V12" fill="none" stroke="#c98a00" stroke-width="2.2"/><path d="M1 20H12V14H20V20H31" fill="none" stroke="#2fb34a" stroke-width="2"/><path d="M1 31V23H12V14H20V23H31V31Z" fill="none" stroke="#444" stroke-width="2"/></g>
<path d="M2027 472H2044L2035.5 484.5Z" fill="#333"/>
<text x="2056.5" y="487" font-size="24" fill="#333" font-weight="bold" textLength="115.5" lengthAdjust="spacingAndGlyphs">Geometría</text>
<text x="2032.4" y="549" font-size="24" fill="#363636" textLength="196.5" lengthAdjust="spacingAndGlyphs">Modo de selección</text>
<text x="2032.4" y="611" font-size="24" fill="#363636" textLength="291" lengthAdjust="spacingAndGlyphs">Selecciones de cara circular</text>
<text x="2032.4" y="673" font-size="24" fill="#363636" textLength="326" lengthAdjust="spacingAndGlyphs">Seleccionar el mismo diámetro</text>
<text x="2032.4" y="735" font-size="24" fill="#363636" textLength="267" lengthAdjust="spacingAndGlyphs">Ordenar por profundidad</text>
<text x="2032.4" y="797" font-size="24" fill="#363636" textLength="85" lengthAdjust="spacingAndGlyphs">Ordenar</text>
<text x="2032.4" y="859" font-size="24" fill="#363636" textLength="144" lengthAdjust="spacingAndGlyphs">Invertir orden</text>
<rect x="2380.5" y="514" width="304" height="54.5" fill="#ffffff" stroke="#c4c4c4" stroke-width="2"/>
<circle cx="2404" cy="541.25" r="15.5" fill="#55c07a" stroke="#3c9a5c" stroke-width="1.5"/>
<text x="2428" y="549.55" font-size="24" fill="#363636" textLength="212" lengthAdjust="spacingAndGlyphs">Caras seleccionadas</text>
<path d="M2660 537.25H2672L2666 545.25Z" fill="#333"/>
<rect x="2381.5" y="576" width="134.5" height="54" fill="#ffffff" stroke="#c4c4c4" stroke-width="2"/>
<path d="M2397 590.0V614.0L2403 608.0L2407 617.0L2411 615.0L2407 607.0L2414 607.0Z" fill="#fff" stroke="#555" stroke-width="1.6" stroke-linejoin="round"/>
<text x="2424" y="611.3" font-size="24" fill="#363636" textLength="78" lengthAdjust="spacingAndGlyphs">8 Caras</text>
<path d="M2540 595L2556 611M2556 595L2540 611" stroke="#555" stroke-width="4"/>
<rect x="2391" y="650.5" width="25" height="25" rx="4" fill="url(#cbg)" stroke="#3a3a3a" stroke-width="1.8"/>
<rect x="2391" y="712.5" width="25" height="25" rx="4" fill="url(#cbg)" stroke="#3a3a3a" stroke-width="1.8"/>
<rect x="2380.5" y="762" width="304" height="54" fill="#ffffff" stroke="#c4c4c4" stroke-width="2"/>
<path d="M2392 801.0L2400 781.0L2416 793.0" fill="none" stroke="#1e8fe0" stroke-width="2"/><circle cx="2392" cy="801.0" r="4" fill="#fff" stroke="#555" stroke-width="1.6"/><circle cx="2400" cy="780.0" r="4" fill="#fff" stroke="#555" stroke-width="1.6"/><circle cx="2416" cy="793.0" r="4" fill="#fff" stroke="#555" stroke-width="1.6"/>
<text x="2428" y="797.3" font-size="24" fill="#363636" textLength="174" lengthAdjust="spacingAndGlyphs">Optimizar orden</text>
<path d="M2660 785.0H2672L2666 793.0Z" fill="#333"/>
<rect x="2391" y="836.6" width="25" height="25" rx="4" fill="url(#cbg)" stroke="#3a3a3a" stroke-width="1.8"/>
<path d="M2009.5 892.6H2722" stroke="#c8c8c8" stroke-width="2"/>
<path d="M2026 925H2044L2035 938Z" fill="#333"/>
<rect x="2059" y="919.5" width="25" height="25" rx="4" fill="url(#cbg)" stroke="#3a3a3a" stroke-width="1.8"/>
<path d="M2065 932.5L2069 939.5L2079 923.5" fill="none" stroke="#222" stroke-width="2.6"/>
<text x="2098.6" y="943" font-size="24" fill="#333" font-weight="bold" textLength="336.4" lengthAdjust="spacingAndGlyphs">Orientación de la herramienta</text>
<text x="2032.3" y="1004.5" font-size="24" fill="#363636" textLength="316.6" lengthAdjust="spacingAndGlyphs">Orientación de la herramienta</text>
<text x="2032.3" y="1066.5" font-size="24" fill="#363636" textLength="50.7" lengthAdjust="spacingAndGlyphs">Eje Z</text>
<text x="2032.3" y="1128.5" font-size="24" fill="#363636" textLength="133.6" lengthAdjust="spacingAndGlyphs">Invertir eje Z</text>
<text x="2032.3" y="1190.5" font-size="24" fill="#363636" textLength="258" lengthAdjust="spacingAndGlyphs">Análisis de accesibilidad</text>
<text x="2032.3" y="1252.5" font-size="24" fill="#363636" textLength="50.7" lengthAdjust="spacingAndGlyphs">Eje X</text>
<text x="2032.3" y="1314.5" font-size="24" fill="#363636" textLength="133.6" lengthAdjust="spacingAndGlyphs">Invertir eje X</text>
<text x="2032.3" y="1376.5" font-size="24" fill="#363636" textLength="70" lengthAdjust="spacingAndGlyphs">Origen</text>
<text x="2032.3" y="1438.5" font-size="24" fill="#363636" textLength="192.8" lengthAdjust="spacingAndGlyphs">Punto del material</text>
<rect x="2380.5" y="967" width="304" height="55.60000000000002" fill="#ffffff" stroke="#c4c4c4" stroke-width="2"/>
<path d="M2392 980.8V1006.8H2418" fill="none" stroke="#1e8fe0" stroke-width="2"/><path d="M2392 1006.8H2418" stroke="#e02020" stroke-width="2.2"/><path d="M2418 1002.8L2424 1006.8L2418 1010.8Z" fill="#e02020"/><path d="M2388 982.8L2392 975.8L2396 982.8Z" fill="#1e8fe0"/><path d="M2394 1004.8L2414 988.8" stroke="#aaa" stroke-width="1.8"/>
<text x="2428" y="1003.0999999999999" font-size="24" fill="#363636" textLength="198.6" lengthAdjust="spacingAndGlyphs">Eje/plano Z y eje X</text>
<path d="M2660 990.8H2672L2666 998.8Z" fill="#333"/>
<rect x="2381.5" y="1029" width="105.0" height="55.5" fill="#ffffff" stroke="#c4c4c4" stroke-width="2"/>
<path d="M2397 1043.75V1067.75L2403 1061.75L2407 1070.75L2411 1068.75L2407 1060.75L2414 1060.75Z" fill="#fff" stroke="#555" stroke-width="1.6" stroke-linejoin="round"/>
<text x="2424" y="1065.05" font-size="24" fill="#363636" textLength="48" lengthAdjust="spacingAndGlyphs">Cara</text>
<path d="M2510 1049L2526 1065M2526 1049L2510 1065" stroke="#555" stroke-width="4"/>
<rect x="2391" y="1104" width="25" height="25" rx="4" fill="url(#cbg)" stroke="#3a3a3a" stroke-width="1.8"/>
<rect x="2391" y="1166" width="25" height="25" rx="4" fill="url(#cbg)" stroke="#3a3a3a" stroke-width="1.8"/>
<rect x="2381.5" y="1215" width="105.0" height="55" fill="#ffffff" stroke="#c4c4c4" stroke-width="2"/>
<path d="M2397 1229.5V1253.5L2403 1247.5L2407 1256.5L2411 1254.5L2407 1246.5L2414 1246.5Z" fill="#fff" stroke="#555" stroke-width="1.6" stroke-linejoin="round"/>
<text x="2424" y="1250.8" font-size="24" fill="#363636" textLength="48" lengthAdjust="spacingAndGlyphs">Cara</text>
<path d="M2510 1234.5L2526 1250.5M2526 1234.5L2510 1250.5" stroke="#555" stroke-width="4"/>
<rect x="2391" y="1290" width="25" height="25" rx="4" fill="url(#cbg)" stroke="#3a3a3a" stroke-width="1.8"/>
<path d="M2397 1303L2401 1310L2411 1294" fill="none" stroke="#222" stroke-width="2.6"/>
<rect x="2380.5" y="1339.6" width="304" height="54.40000000000009" fill="#ffffff" stroke="#c4c4c4" stroke-width="2"/>
<path d="M2390 1359.8L2396 1353.8H2418V1373.8L2412 1379.8H2390Z" fill="#d9bd68" stroke="#9a7c2a" stroke-width="1.2"/><path d="M2390 1359.8H2412V1379.8M2412 1359.8L2418 1353.8" fill="none" stroke="#9a7c2a" stroke-width="1.2"/><circle cx="2408" cy="1358.8" r="5" fill="#fff"/><path d="M2405 1358.8H2411M2408 1355.8V1361.8" stroke="#1e8fe0" stroke-width="1.6"/>
<text x="2428" y="1375.1" font-size="24" fill="#363636" textLength="227.4" lengthAdjust="spacingAndGlyphs">Punto del bloque de...</text>
<path d="M2660 1362.8H2672L2666 1370.8Z" fill="#333"/>
<rect x="2380.7" y="1401" width="238.3" height="55" fill="#0696d7"/>
<path d="M2397 1415V1439L2403 1433L2407 1442L2411 1440L2407 1432L2414 1432Z" fill="#f2f2f2" stroke="#444" stroke-width="1.6" stroke-linejoin="round"/>
<text x="2423.7" y="1437" font-size="24" fill="#ffffff" textLength="180.3" lengthAdjust="spacingAndGlyphs">Punto del cuadro</text>
<path d="M2008 1463H2748" stroke="#c8c8c8" stroke-width="2"/>
<circle cx="2048.3" cy="1499.8" r="12.3" fill="#111"/><rect x="2046.3" y="1496" width="4" height="10" fill="#fff"/><rect x="2046.3" y="1490.5" width="4" height="3.5" fill="#fff"/>
<rect x="2451" y="1479" width="118.5" height="40" fill="#ececec" stroke="#a8a8a8" stroke-width="2"/>
<text x="2465.4" y="1508.5" font-size="25" fill="#555" textLength="88.4" lengthAdjust="spacingAndGlyphs">Aceptar</text>
<rect x="2606.5" y="1480.5" width="119" height="39" fill="#ececec" stroke="#a8a8a8" stroke-width="2"/>
<text x="2616.6" y="1509" font-size="25" fill="#555" textLength="98.6" lengthAdjust="spacingAndGlyphs">Cancelar</text>
</g>
<g id="viewcube">
<ellipse cx="2882" cy="338" rx="72" ry="48" fill="#000" opacity="0.10" filter="url(#cubesh)"/>
<path d="M2883 201V212" stroke="#55ee55" stroke-width="2.5"/>
<text x="2876.6" y="201.5" font-size="32" fill="#5ef05e" textLength="13.4" lengthAdjust="spacingAndGlyphs" stroke="#5ef05e" stroke-width="0.8">Y</text>
<path d="M2807 269.6L2877.5 339V370.5L2820 309.6Z" fill="#e9e9e9" stroke="#b0b0b0" stroke-width="1" stroke-dasharray="3 2"/>
<path d="M2953.7 274.8L2877.5 339V370.5L2942 314Z" fill="#e2e2e2" stroke="#b0b0b0" stroke-width="1" stroke-dasharray="3 2"/>
<path d="M2882.7 212L2807 269.6L2877.5 339L2953.7 274.8Z" fill="#f0f0f0" stroke="#a8a8a8" stroke-width="1" stroke-dasharray="3 2"/>
<path d="M2882.7 233L2836 269L2879 311L2926 272Z" fill="#e6e7ea"/>
<text x="0" y="0" font-size="19" font-weight="bold" fill="#8e939a" text-anchor="middle" transform="translate(2877 281) rotate(44) scale(0.92 1)">SUPERIOR</text>
<text x="0" y="0" font-size="10" font-weight="bold" fill="#a0a0a0" opacity="0.7" text-anchor="middle" transform="translate(2846 320) rotate(46)">FRONTAL</text>
<text x="0" y="0" font-size="10" font-weight="bold" fill="#a0a0a0" opacity="0.7" text-anchor="middle" transform="translate(2912 324) rotate(-40)">DERECHA</text>
<path d="M2806 318L2820 308" stroke="#6a6aff" stroke-width="2"/>
<text x="2790.5" y="337.8" font-size="32" fill="#6a6aff" textLength="15.5" lengthAdjust="spacingAndGlyphs" stroke="#6a6aff" stroke-width="0.8">Z</text>
<path d="M2942 314L2953 323" stroke="#ff8080" stroke-width="2"/>
<text x="2954" y="343.8" font-size="32" fill="#ff7474" textLength="15" lengthAdjust="spacingAndGlyphs" stroke="#ff7474" stroke-width="0.8">X</text>
</g>
<g id="navbar">
<rect x="1075" y="1762" width="844" height="47" fill="#efefef"/>
<g transform="translate(1081 1769)"><path d="M1 18Q-1 12 16 11Q33 12 31 18Q29 24 16 24Q8 24 5 22" fill="none" stroke="#333" stroke-width="2.2"/><path d="M7 24L2 20V28Z" fill="#333"/><path d="M12 30V12H8L15 3L22 12H18V30Z" fill="#f4f4f4" stroke="#444" stroke-width="1.8" stroke-linejoin="round"/></g>
<path d="M1122 1782H1134L1128 1789.5Z" fill="#2a2a2a"/>
<g transform="translate(1148 1772)"><path d="M3 8L12 1V8M14 8L26 3V8" fill="#cfcfcf" stroke="#555" stroke-width="1.3"/><rect x="1" y="8" width="27" height="20" fill="#f6f6f6" stroke="#555" stroke-width="1.8"/><rect x="5" y="12" width="19" height="11" fill="#9aa3b2" stroke="#555" stroke-width="1.2"/></g>
<g transform="translate(1199 1769)"><path d="M9 32Q3 26 0 20Q2 17 5 19L9 23V5Q9 2 11.5 2Q14 2 14 5V15V3Q14 0 16.5 0Q19 0 19 3V15V4Q19 1 21.5 1Q24 1 24 4V16V9Q24 6 26.5 6Q29 6 29 9V22Q29 30 24 32Z" fill="#f4f4f4" stroke="#444" stroke-width="1.7" stroke-linejoin="round"/></g>
<g transform="translate(1250 1769)"><circle cx="12" cy="13" r="10.5" fill="#e4eeee" stroke="#333" stroke-width="2"/><path d="M20 21L30 31" stroke="#333" stroke-width="4" stroke-linecap="round"/><path d="M27 2V9M23.5 5.5H30.5M23.5 10H30.5" stroke="#333" stroke-width="1.6"/></g>
<g transform="translate(1302 1770)"><rect x="1" y="1" width="29" height="29" fill="none" stroke="#777" stroke-width="1.3" stroke-dasharray="3 2"/><circle cx="12" cy="12" r="10.5" fill="#e4eeee" stroke="#333" stroke-width="2"/><path d="M20 20L29 29" stroke="#333" stroke-width="4" stroke-linecap="round"/></g>
<path d="M1345 1782H1357L1351 1789.5Z" fill="#2a2a2a"/>
<g transform="translate(1368 1769)"><rect x="1" y="1" width="29" height="23" fill="#f2f2f2" stroke="#444" stroke-width="1.6"/><rect x="4" y="4" width="23" height="17" fill="#8db4e2" stroke="#2f4f8f" stroke-width="1.4"/><path d="M10 31H21M15.5 25V30" stroke="#777" stroke-width="3"/></g>
<path d="M1404 1782H1416L1410 1789.5Z" fill="#2a2a2a"/>
<g transform="translate(1430 1770)"><rect x="1" y="1" width="28" height="29" fill="#fff" stroke="#444" stroke-width="1.5"/><path d="M5.5 1V30M10 1V30M14.5 1V30M19 1V30M23.5 1V30M1 5.5H29M1 10H29M1 14.5H29M1 19H29M1 23.5H29" stroke="#8a93a3" stroke-width="1.6"/></g>
<path d="M1465 1782H1477L1471 1789.5Z" fill="#2a2a2a"/>
<g transform="translate(1492 1770)"><path d="M11 1.5H31V21.5L22 30.5H2V10.5Z" fill="#fbfbfb" stroke="#333" stroke-width="1.4"/><path d="M11 1.5V21.5H31M11 21.5L2 30.5" fill="none" stroke="#333" stroke-width="1"/><rect x="2" y="10.5" width="20" height="20" fill="#9ab8dc" stroke="#333" stroke-width="1.4"/><path d="M2 10.5L11 1.5M22 10.5L31 1.5" stroke="#333" stroke-width="1.2"/><circle cx="10.5" cy="22" r="6" fill="#d6d6d6" stroke="#555" stroke-width="1.2"/><circle cx="16.5" cy="16.5" r="3" fill="#e8e8e8" stroke="#777" stroke-width="1"/></g>
<path d="M1528.4 1782H1540.4L1534.4 1789.5Z" fill="#2a2a2a"/>
<g transform="translate(1553 1770)"><rect x="5.5" y="3.4" width="22.8" height="24.1" fill="#a9c9ee" stroke="#444" stroke-width="1.2"/><path d="M5 9.2H30Q34 9.2 34 12.4Q34 15.6 30 15.6H4Q0 15.6 0 18.8Q0 22 4 22H30" fill="none" stroke="#1b2f6b" stroke-width="2.2"/></g>
<path d="M1590.5 1782H1602.5L1596.5 1789.5Z" fill="#2a2a2a"/>
<g transform="translate(1618 1770)"><path d="M2.5 11A12.5 12.5 0 0 1 24.5 8" fill="none" stroke="#2a7ad6" stroke-width="2.6"/><path d="M27 4V14L19 11Z" fill="#2a7ad6"/><path d="M26.5 20A12.5 12.5 0 0 1 4 23" fill="none" stroke="#1b2f6b" stroke-width="2.6"/><path d="M1.5 27V16.5L10 20Z" fill="#1b2f6b"/></g>
<path d="M1652.6 1782H1664.6L1658.6 1789.5Z" fill="#2a2a2a"/>
<g transform="translate(1679 1770)"><path d="M0 15.6L14.6 1L30 15.6V19L14.6 33.5L0 19Z" fill="#5ea6e0"/><path d="M14.6 30.2L30 15.6V19L14.6 33.5Z" fill="#3f86c8"/><path d="M0 15.6L14.6 30.2V33.5L0 19Z" fill="#4f98d6"/><path d="M4 15.6L14.6 5L26 15.6L14.6 26Z" fill="#7bbcee"/><path d="M8 15.6L14.6 9L22 15.6L14.6 22Z" fill="#8fc8f2"/><path d="M0 15.6L14.6 1L30 15.6L14.6 30.2Z" fill="none" stroke="#4a90d0" stroke-width="0.8"/></g>
<path d="M1714.6 1782H1726.6L1720.6 1789.5Z" fill="#2a2a2a"/>
<g transform="translate(1740 1773)"><path d="M0.5 24V7L4.5 3H28L32 7V24Z" fill="#e4e4e4" stroke="#666" stroke-width="1.4"/><rect x="9" y="3.5" width="13" height="20" fill="#a6c8ee" stroke="#7a9cc8" stroke-width="1.2"/><rect x="11.5" y="9" width="8" height="6" fill="#dcdcdc" stroke="#7a9cc8" stroke-width="1"/><rect x="24" y="10" width="6" height="10" fill="#b6d4f0" stroke="#7a9cc8" stroke-width="0.8"/><rect x="25" y="14" width="2" height="2" fill="#e0103a"/><rect x="1" y="23" width="30.5" height="5.5" fill="#1f5a8f"/></g>
<path d="M1776.7 1782H1788.7L1782.7 1789.5Z" fill="#2a2a2a"/>
<g transform="translate(1805 1769)"><rect x="1" y="1" width="11" height="9.5" fill="#dcdcdc"/><rect x="12" y="1" width="10" height="9.5" fill="#bdbdbd"/><rect x="5" y="10.5" width="13" height="2" fill="#999"/><rect x="6.4" y="12.5" width="10" height="21" rx="1.5" fill="#a8a8a8"/><path d="M7 20L16 16M7 27L16 23" stroke="#d8d8d8" stroke-width="2.2"/></g>
<path d="M1838.8 1782H1850.8L1844.8 1789.5Z" fill="#2a2a2a"/>
<g transform="translate(1863 1772)"><path d="M0.5 1H8V0H15V2.5H26V5.5H32.8V23H26V26H15V28H8V27H0.5V20H14Q19 20 19 14Q19 8 14 8H0.5Z" fill="#5aa7e4" stroke="#3f8ad0" stroke-width="1"/></g>
<path d="M1900 1782H1912L1906 1789.5Z" fill="#2a2a2a"/>
</g>
<circle cx="2967" cy="1795" r="17" fill="#222"/><path d="M2956 1802L2976 1786M2958 1806L2978 1790M2962 1806L2978 1794" stroke="#fff" stroke-width="2"/>
</svg>
</body></html>
